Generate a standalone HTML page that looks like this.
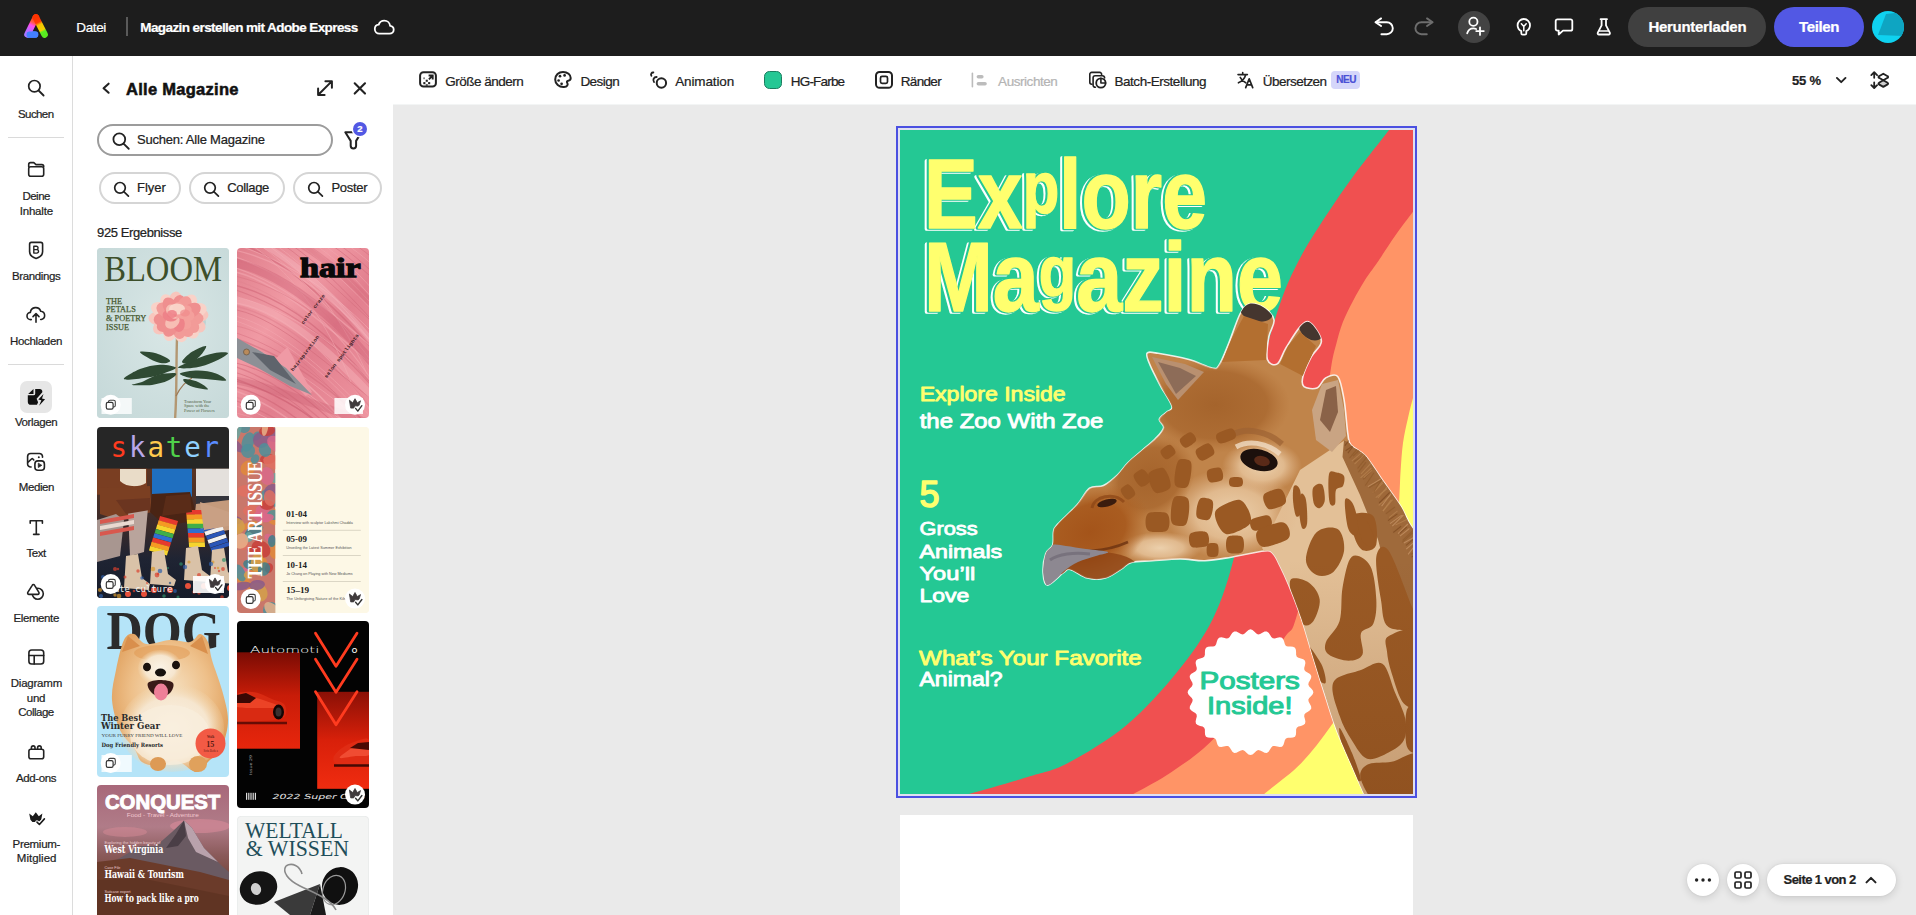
<!DOCTYPE html>
<html lang="de">
<head>
<meta charset="utf-8">
<title>Magazin erstellen mit Adobe Express</title>
<style>
*{box-sizing:border-box;margin:0;padding:0}
html,body{width:1916px;height:915px;overflow:hidden}
body{position:relative;background:#eaeaea;font-family:"Liberation Sans",sans-serif;color:#222;-webkit-font-smoothing:antialiased}
.abs{position:absolute}
svg{display:block;overflow:visible}
.t{position:absolute;white-space:nowrap;line-height:1;-webkit-text-stroke:.22px currentColor}
/* top bar */
#top{position:absolute;left:0;top:0;width:1916px;height:56px;background:#1d1d1d}
#top .t{color:#fff}
/* rail */
#rail{position:absolute;left:0;top:56px;width:73px;height:859px;background:#fff;border-right:1px solid #dcdcdc}
#rail .lbl{position:absolute;left:0;width:72px;text-align:center;font-size:12px;line-height:15px;color:#222;letter-spacing:-0.3px}
#rail .ico{position:absolute}
#rail hr{position:absolute;left:8px;width:56px;border:0;border-top:1px solid #dadada}
/* panel */
#panel{position:absolute;left:73px;top:56px;width:320px;height:859px;background:#fff;overflow:hidden}
/* toolbar */
#bar{position:absolute;left:393px;top:56px;width:1523px;height:49px;background:#fff;border-bottom:1px solid #f3f5f5}
#bar .t{font-size:14px;color:#222;letter-spacing:-0.45px}
/* canvas */
#stage{position:absolute;left:393px;top:105px;width:1523px;height:810px;overflow:hidden}
.thumb{position:absolute;width:132px;border-radius:4px;overflow:hidden}
</style>
</head>
<body>

<!-- TOPBAR -->
<div id="top">
<svg class="abs" style="left:20px;top:10px" width="32" height="32" viewBox="20 10 32 32" fill="none" stroke-width="6.600" stroke-linecap="round">
<defs>
<linearGradient id="lgL" x1="35.900" y1="17.300" x2="27.400" y2="34.600" gradientUnits="userSpaceOnUse">
<stop offset="0" stop-color="#ff3300"/><stop offset=".3" stop-color="#ff5a4a"/><stop offset=".48" stop-color="#ff4df0"/><stop offset=".75" stop-color="#c366ff"/><stop offset="1" stop-color="#a878ff"/>
</linearGradient>
<linearGradient id="lgR" x1="35.900" y1="17.300" x2="44.700" y2="34.800" gradientUnits="userSpaceOnUse">
<stop offset="0" stop-color="#ff3300"/><stop offset=".28" stop-color="#ff3a08"/><stop offset=".42" stop-color="#f5c400"/><stop offset=".72" stop-color="#f2d000"/><stop offset=".82" stop-color="#5aee22"/><stop offset="1" stop-color="#58ea20"/>
</linearGradient>
</defs>
<path d="M28.300 34.500h6.800" stroke="#4480ff"/>
<path d="M35.900 17.400L27.500 34.400" stroke="url(#lgL)"/>
<path d="M29.600 34.700h5.400" stroke="#4480ff" stroke-width="6.200"/>
<path d="M35.900 17.400L44.600 34.600" stroke="url(#lgR)"/>
</svg>
<span class="t" style="left:76.3px;top:20.6px;font-size:13.5px;color:#fff;letter-spacing:-0.383px;">Datei</span>
<div class="abs" style="left:126px;top:17px;width:1.5px;height:19px;background:#5a5a5a"></div>
<span class="t" style="left:140.3px;top:20.6px;font-size:13.5px;font-weight:700;color:#fff;letter-spacing:-0.591px;">Magazin erstellen mit Adobe Express</span>
<svg class="abs" style="left:372px;top:18px" width="24" height="18" viewBox="372 18 24 18" fill="none" stroke="#fff" stroke-width="1.8" stroke-linejoin="round" stroke-linecap="round">
<path d="M379.300 33.700h10.200c2.400 0 4.200-1.700 4.200-3.900 0-2.100-1.600-3.700-3.600-3.900-.300-3-2.700-5.300-5.800-5.300-2.600 0-4.800 1.600-5.600 4-2.200.200-3.900 2-3.900 4.400 0 2.600 2 4.700 4.500 4.700z"/></svg>
<svg class="abs" style="left:1370px;top:14px" width="70" height="26" viewBox="1370 14 70 26" fill="none" stroke-width="1.9" stroke-linecap="round" stroke-linejoin="round">
<g stroke="#fff"><path d="M1381.100 18.400l-5.600 3.800 5.600 3.800"/><path d="M1376.200 22.200h10.600a6 6 0 0 1 0 12h-5.400"/></g>
<g stroke="#6e6e6e"><path d="M1427 18.400l5.600 3.800-5.600 3.800"/><path d="M1431.800 22.200h-10.400a6 6 0 0 0 0 12h5.400"/></g>
</svg>
<svg class="abs" style="left:1458px;top:11px" width="32" height="32" viewBox="1458 11 32 32" fill="none" stroke="#fff" stroke-width="1.8" stroke-linecap="round">
<circle cx="1474" cy="27" r="16" fill="#434343" stroke="none"/>
<circle cx="1473.400" cy="21.700" r="4.100"/>
<path d="M1467.200 33.300c.800-3 3.200-4.900 6.200-4.900 1 0 1.900.200 2.700.600"/>
<path d="M1480 27.300v7.600M1476.200 31.100h7.600"/></svg>
<svg class="abs" style="left:1514px;top:16px" width="20" height="22" viewBox="1514 16 20 22" fill="none" stroke="#fff" stroke-width="1.8" stroke-linecap="round" stroke-linejoin="round">
<path d="M1521.300 33.200v-2.100c-2.300-1.200-3.700-3.300-3.700-5.900a6.200 6.200 0 0 1 12.400 0c0 2.600-1.400 4.700-3.700 5.900v2.100a1.400 1.400 0 0 1-1.400 1.400h-2.200a1.400 1.400 0 0 1-1.400-1.400z"/>
<path d="M1521.400 23.800l2.400 2.600 2.400-2.600M1523.800 26.400v4.400" stroke-width="1.5"/></svg>
<svg class="abs" style="left:1552px;top:16px" width="24" height="22" viewBox="1552 16 24 22" fill="none" stroke="#fff" stroke-width="1.8" stroke-linejoin="round">
<path d="M1557.400 19.300h13.200a1.700 1.700 0 0 1 1.700 1.700v8a1.700 1.700 0 0 1-1.700 1.700h-7.600l-4.300 3.800v-3.800h-1.300a1.700 1.700 0 0 1-1.700-1.700v-8a1.700 1.700 0 0 1 1.700-1.700z"/></svg>
<svg class="abs" style="left:1594px;top:16px" width="20" height="22" viewBox="1594 16 20 22" fill="none" stroke="#fff" stroke-width="1.8" stroke-linejoin="round" stroke-linecap="round">
<path d="M1600.600 19.200h6.400M1601.600 19.400v6l-3.800 7.200a1.300 1.300 0 0 0 1.200 1.900h9.600a1.300 1.300 0 0 0 1.200-1.900l-3.800-7.200v-6"/>
<path d="M1599.300 31h9" stroke-width="1.600"/></svg>
<div class="abs" style="left:1628px;top:7px;width:138px;height:40px;border-radius:20px;background:#404040"></div>
<span class="t" style="left:1648.4px;top:19.1px;font-size:15px;font-weight:700;color:#fff;letter-spacing:-0.293px;">Herunterladen</span>
<div class="abs" style="left:1774px;top:7px;width:90px;height:40px;border-radius:20px;background:#5258e4"></div>
<span class="t" style="left:1799.0px;top:19.1px;font-size:15px;font-weight:700;color:#fff;letter-spacing:-0.372px;">Teilen</span>
<svg class="abs" style="left:1872px;top:11px" width="32" height="32" viewBox="0 0 32 32">
<defs><clipPath id="avc"><circle cx="16" cy="16" r="16"/></clipPath></defs>
<circle cx="16" cy="16" r="16" fill="#0fd2f0"/>
<path d="M14 3L32 1V25L6 24z" fill="#0ea5c2" clip-path="url(#avc)"/></svg>
</div>

<!-- RAIL -->
<div id="rail">
<svg class="abs" style="left:26px;top:22px" width="20" height="20" viewBox="26 78 20 20" fill="none" stroke="#222" stroke-width="1.6" stroke-linecap="round" stroke-linejoin="round"><circle cx="34.400" cy="86.200" r="5.700" stroke-width="1.700"/><path d="M38.600 90.500l5 5" stroke-width="1.800"/></svg>
<span class="t" style="left:18.0px;top:52.8px;font-size:11.5px;color:#1f1f1f;letter-spacing:-0.586px;">Suchen</span>
<hr style="top:81px">
<svg class="abs" style="left:26px;top:104px" width="20" height="19" viewBox="26 160 20 19" fill="none" stroke="#222" stroke-width="1.6" stroke-linecap="round" stroke-linejoin="round"><path d="M28.700 166.800v-2.400a1.800 1.800 0 0 1 1.800-1.800h3.300l2.200 2h5.900a1.800 1.800 0 0 1 1.800 1.800v.4"/><rect x="28.700" y="166.800" width="15" height="9.500" rx="2"/></svg>
<span class="t" style="left:22.4px;top:134.9px;font-size:11.5px;color:#1f1f1f;letter-spacing:-0.492px;">Deine</span>
<span class="t" style="left:19.7px;top:149.8px;font-size:11.5px;color:#1f1f1f;letter-spacing:-0.190px;">Inhalte</span>
<svg class="abs" style="left:27px;top:184px" width="18" height="21" viewBox="27 240 18 21" fill="none" stroke="#222" stroke-width="1.6" stroke-linecap="round" stroke-linejoin="round"><path d="M31.400 242.400h9.400a1.800 1.800 0 0 1 1.800 1.800v7.600c0 3.200-2.400 5.400-6.500 6.600-4.100-1.200-6.500-3.400-6.500-6.600v-7.600a1.800 1.800 0 0 1 1.800-1.800z"/><path d="M33.800 246.300h2.600a1.600 1.600 0 0 1 0 3.300h-2.600zM33.800 249.600h3a1.750 1.750 0 0 1 0 3.500h-3z" stroke-width="1.400"/></svg>
<span class="t" style="left:12.0px;top:214.6px;font-size:11.5px;color:#1f1f1f;letter-spacing:-0.366px;">Brandings</span>
<svg class="abs" style="left:25px;top:250px" width="22" height="19" viewBox="25 306 22 19" fill="none" stroke="#222" stroke-width="1.6" stroke-linecap="round" stroke-linejoin="round"><path d="M31.300 319.600h-.5a3.600 3.600 0 0 1-.4-7.200 5.300 5.300 0 0 1 10.300-1.200 4.200 4.200 0 0 1 .6 8.300h-.6"/><path d="M36 322.200v-8.400M33 316.600l3-3 3 3"/></svg>
<span class="t" style="left:10.1px;top:279.6px;font-size:11.5px;color:#1f1f1f;letter-spacing:-0.343px;">Hochladen</span>
<hr style="top:308px">
<div class="abs" style="left:20px;top:325px;width:32px;height:32px;border-radius:7px;background:#e6e6e6"></div>
<svg class="abs" style="left:26px;top:331px" width="21" height="20" viewBox="26 387 21 20" fill="#111" stroke="none"><path d="M28.200 393.900l5.300-4.800v4.800z"/><path d="M35.200 388.900h4.600c1.500 0 2.500 1 2.500 2.400v.9l-5.700 6.500 1.500 3.500-1.100 2.650h-6.100a3.100 3.100 0 0 1-3.100-3.100v-6.500h5.800a1.600 1.600 0 0 0 1.600-1.600z"/><path d="M43.500 393.900l-5.200 5.700 3.050.65-2.200 5.500 5.900-6.600-3.050-.65z"/></svg>
<span class="t" style="left:14.9px;top:361.4px;font-size:11.5px;color:#1f1f1f;letter-spacing:-0.388px;">Vorlagen</span>
<svg class="abs" style="left:25px;top:396px" width="22" height="20" viewBox="25 452 22 20" fill="none" stroke="#222" stroke-width="1.6" stroke-linecap="round" stroke-linejoin="round"><path d="M31.100 467h-.4a3.100 3.100 0 0 1-3.100-3.100v-7.300a3.100 3.100 0 0 1 3.100-3.100h8.700a3.100 3.100 0 0 1 3.100 3.100v.7"/><circle cx="38.800" cy="457.300" r="1" fill="#222" stroke="none"/><path d="M28.400 461.900l3.100-2.900c.5-.4 1-.4 1.400 0l.9 1"/><rect x="34.900" y="460.900" width="9.500" height="9.300" rx="3"/><path d="M38.300 463.500v4l3.200-2z" fill="#222" stroke-width=".8"/></svg>
<span class="t" style="left:18.8px;top:426.3px;font-size:11.5px;color:#1f1f1f;letter-spacing:-0.403px;">Medien</span>
<svg class="abs" style="left:28px;top:463px" width="17" height="18" viewBox="28 519 17 18" fill="none" stroke="#222" stroke-width="1.6" stroke-linecap="round" stroke-linejoin="round"><path d="M30.200 523.300v-2.500h12.200v2.500M36.300 520.800v13.600M33.600 534.400h5.400"/></svg>
<span class="t" style="left:26.4px;top:491.7px;font-size:11.5px;color:#1f1f1f;letter-spacing:-0.448px;">Text</span>
<svg class="abs" style="left:26px;top:526px" width="20" height="20" viewBox="26 582 20 20" fill="none" stroke="#222" stroke-width="1.6" stroke-linecap="round" stroke-linejoin="round"><circle cx="37.800" cy="593.800" r="5.500"/><path d="M32.200 585.300a1.350 1.350 0 0 1 2.400 0l4.300 7.100a1.350 1.350 0 0 1-1.200 2h-8.700a1.350 1.350 0 0 1-1.200-2z" fill="#fff"/></svg>
<span class="t" style="left:13.5px;top:556.6px;font-size:11.5px;color:#1f1f1f;letter-spacing:-0.399px;">Elemente</span>
<svg class="abs" style="left:27px;top:592px" width="19" height="18" viewBox="27 648 19 18" fill="none" stroke="#222" stroke-width="1.6" stroke-linecap="round" stroke-linejoin="round"><rect x="28.900" y="650" width="14.800" height="14" rx="2.800"/><path d="M28.900 655.500h14.800M34.200 655.500v8.500"/></svg>
<span class="t" style="left:10.8px;top:622.3px;font-size:11.5px;color:#1f1f1f;letter-spacing:-0.231px;">Diagramm</span>
<span class="t" style="left:26.7px;top:636.8px;font-size:11.5px;color:#1f1f1f;letter-spacing:-0.196px;">und</span>
<span class="t" style="left:18.3px;top:651.3px;font-size:11.5px;color:#1f1f1f;letter-spacing:-0.514px;">Collage</span>
<svg class="abs" style="left:27px;top:688px" width="19" height="17" viewBox="27 744 19 17" fill="none" stroke="#222" stroke-width="1.6" stroke-linecap="round" stroke-linejoin="round"><rect x="28.900" y="749.300" width="14.800" height="9.400" rx="2"/><path d="M31.400 749.300v-1.600a1.800 1.800 0 0 1 3.600 0v1.600M37.600 749.300v-1.600a1.800 1.800 0 0 1 3.600 0v1.600"/></svg>
<span class="t" style="left:16.1px;top:716.7px;font-size:11.5px;color:#1f1f1f;letter-spacing:-0.421px;">Add-ons</span>
<svg class="abs" style="left:28px;top:755px" width="19" height="16" viewBox="28 811 19 16" fill="none" stroke="#222" stroke-width="1.6" stroke-linecap="round" stroke-linejoin="round"><path d="M29.200 813.600l3.600 2.600 3-3.900 3 3.900 3.600-2.600-1.200 6.200-2.600 2.100h-6.200l-2-2.100z" fill="#1a1a1a" stroke="none"/><path d="M37 822.100l2.400 2.400 5-5.600" stroke="#fff" stroke-width="3.600"/><path d="M37 822.100l2.400 2.400 5-5.600" stroke="#1a1a1a" stroke-width="1.600"/></svg>
<span class="t" style="left:12.5px;top:782.8px;font-size:11.5px;color:#1f1f1f;letter-spacing:-0.280px;">Premium-</span>
<span class="t" style="left:16.8px;top:796.7px;font-size:11.5px;color:#1f1f1f;letter-spacing:0.007px;">Mitglied</span>
</div>

<!-- PANEL -->
<div id="panel">
<svg class="abs" style="left:27px;top:25px" width="12" height="14" viewBox="100 81 12 14" fill="none" stroke="#222" stroke-width="1.7" stroke-linecap="round" stroke-linejoin="round"><path d="M108.600 83.700l-5 4.500 5 4.500" stroke-width="2.100"/></svg>
<span class="t" style="left:53.0px;top:24.8px;font-size:16.5px;font-weight:700;color:#111;letter-spacing:0.275px;-webkit-text-stroke:.55px #111;">Alle Magazine</span>
<svg class="abs" style="left:242px;top:22px" width="20" height="20" viewBox="315 78 20 20" fill="none" stroke="#222" stroke-width="1.7" stroke-linecap="round" stroke-linejoin="round"><path d="M318.300 94.800l13.400-13.400M325.400 81.200h6.500v6.500M324.600 95h-6.500v-6.500" stroke-width="2"/></svg>
<svg class="abs" style="left:279px;top:25px" width="16" height="15" viewBox="352 81 16 15" fill="none" stroke="#222" stroke-width="1.7" stroke-linecap="round" stroke-linejoin="round"><path d="M354.700 83.300l10.300 10.300M365 83.300l-10.300 10.300" stroke-width="2.100"/></svg>
<div class="abs" style="left:24px;top:68px;width:236px;height:32px;border:2px solid #9c9c9c;border-radius:16px;background:#fff"></div>
<svg class="abs" style="left:37px;top:74px" width="20" height="21" viewBox="110 130 20 21" fill="none" stroke="#222" stroke-width="1.800" stroke-linecap="round"><circle cx="119.3" cy="139.3" r="5.9"/><path d="M123.55 143.55l5.2 5.2"/></svg>
<span class="t" style="left:64.0px;top:76.8px;font-size:13px;color:#222;letter-spacing:-0.217px;">Suchen: Alle Magazine</span>
<svg class="abs" style="left:269px;top:73px" width="20" height="22" viewBox="342 129 20 22" fill="none" stroke="#222" stroke-width="1.7" stroke-linecap="round" stroke-linejoin="round"><path d="M345.300 132.300h16.200l-5.400 8.600v4.900a2.700 2.700 0 0 1-5.400 0v-4.900z" stroke-width="2"/></svg>
<div class="abs" style="left:279.8px;top:66.2px;width:14px;height:14px;border-radius:7px;background:#5258e4;box-shadow:0 0 0 1.500px #fff"></div>
<span class="t" style="left:284.3px;top:67.9px;font-size:9.5px;font-weight:700;color:#fff;letter-spacing:0.000px;">2</span>
<div class="abs" style="left:26px;top:116px;width:82px;height:32px;border:2px solid #d5d5d5;border-radius:16px;background:#fff"></div>
<svg class="abs" style="left:39px;top:124px" width="20" height="20" viewBox="112 180 20 20" fill="none" stroke="#222" stroke-width="1.700" stroke-linecap="round"><circle cx="120.0" cy="187.8" r="5.3"/><path d="M123.82 191.62l4.6 4.6"/></svg>
<span class="t" style="left:64.0px;top:125.0px;font-size:13px;color:#222;letter-spacing:-0.038px;">Flyer</span>
<div class="abs" style="left:116px;top:116px;width:96px;height:32px;border:2px solid #d5d5d5;border-radius:16px;background:#fff"></div>
<svg class="abs" style="left:129px;top:124px" width="20" height="20" viewBox="202 180 20 20" fill="none" stroke="#222" stroke-width="1.700" stroke-linecap="round"><circle cx="210.0" cy="187.8" r="5.3"/><path d="M213.82 191.62l4.6 4.6"/></svg>
<span class="t" style="left:154.2px;top:125.0px;font-size:13px;color:#222;letter-spacing:-0.328px;">Collage</span>
<div class="abs" style="left:220px;top:116px;width:89px;height:32px;border:2px solid #d5d5d5;border-radius:16px;background:#fff"></div>
<svg class="abs" style="left:233px;top:124px" width="20" height="20" viewBox="306 180 20 20" fill="none" stroke="#222" stroke-width="1.700" stroke-linecap="round"><circle cx="314.0" cy="187.8" r="5.3"/><path d="M317.82 191.62l4.6 4.6"/></svg>
<span class="t" style="left:258.4px;top:125.0px;font-size:13px;color:#222;letter-spacing:-0.296px;">Poster</span>
<span class="t" style="left:24.1px;top:169.6px;font-size:13px;color:#222;letter-spacing:-0.396px;">925 Ergebnisse</span>
<div class="thumb" style="left:24px;top:192px;height:170px"><svg width="132" height="170" viewBox="97 248 132 170" style="overflow:hidden"><rect x="97" y="248" width="132" height="170" fill="#cfe0df"/>
<defs><radialGradient id="blg" cx=".55" cy=".45" r=".7"><stop offset="0" stop-color="#d9e7e6"/><stop offset="1" stop-color="#c6d9d9"/></radialGradient></defs><rect x="97" y="248" width="132" height="170" fill="url(#blg)"/>
<text x="104.2" y="280.8" textLength="117.8" lengthAdjust="spacingAndGlyphs" font-family="Liberation Serif, serif" font-weight="400" font-size="36.5" fill="#3d4f2a" >BLOOM</text>
<text x="106" y="303.8" font-family="Liberation Serif, serif" font-weight="400" font-size="8.3" fill="#47592f" stroke="#47592f" stroke-width=".25">THE</text>
<text x="106" y="312.45" font-family="Liberation Serif, serif" font-weight="400" font-size="8.3" fill="#47592f" stroke="#47592f" stroke-width=".25">PETALS</text>
<text x="106" y="321.1" font-family="Liberation Serif, serif" font-weight="400" font-size="8.3" fill="#47592f" stroke="#47592f" stroke-width=".25">&amp; POETRY</text>
<text x="106" y="329.75" font-family="Liberation Serif, serif" font-weight="400" font-size="8.3" fill="#47592f" stroke="#47592f" stroke-width=".25">ISSUE</text>
<path d="M177 338c-1 30 0 55-2 82" stroke="#b39772" stroke-width="2.400" fill="none"/>
<path d="M176 396c4-8 8-14 16-18" stroke="#9c7a58" stroke-width="1.300" fill="none"/>
<path d="M176.0 367.6C175.3 366.2 166.0 364.5 160.0 364.7C154.0 365.0 146.0 366.6 140.0 369.0C134.0 371.4 123.0 377.7 124.0 379.1C125.0 380.6 139.3 378.6 146.0 377.7C152.7 376.7 159.0 375.0 164.0 373.4C169.0 371.7 176.7 369.0 176.0 367.6Z" fill="#2f4a33"/>
<path d="M176.0 373.4C174.3 372.4 163.7 373.4 158.0 374.8C152.3 376.2 146.3 380.3 142.0 382.0C137.7 383.7 130.3 384.4 132.0 384.9C133.7 385.4 146.0 385.6 152.0 384.9C158.0 384.2 164.0 382.5 168.0 380.6C172.0 378.6 177.7 374.3 176.0 373.4Z" fill="#2f4a33"/>
<path d="M170.0 360.4C169.0 358.7 161.0 354.6 156.0 353.2C151.0 351.8 141.0 350.8 140.0 351.8C139.0 352.7 146.3 357.0 150.0 359.0C153.7 360.9 158.7 363.0 162.0 363.3C165.3 363.5 171.0 362.1 170.0 360.4Z" fill="#2f4a33"/>
<path d="M178.0 367.6C178.0 366.2 190.0 361.4 196.0 359.0C202.0 356.6 208.7 354.2 214.0 353.2C219.3 352.2 228.0 351.8 228.0 353.2C228.0 354.6 219.3 359.4 214.0 361.8C208.7 364.2 202.0 366.6 196.0 367.6C190.0 368.6 178.0 369.0 178.0 367.6Z" fill="#2f4a33"/>
<path d="M180.0 373.4C181.3 372.2 192.0 370.5 198.0 370.5C204.0 370.5 211.3 371.7 216.0 373.4C220.7 375.0 227.7 379.6 226.0 380.6C224.3 381.5 212.0 379.6 206.0 379.1C200.0 378.6 194.3 378.6 190.0 377.7C185.7 376.7 178.7 374.6 180.0 373.4Z" fill="#2f4a33"/>
<path d="M182.0 361.8C182.3 359.9 188.0 354.4 192.0 351.8C196.0 349.1 204.7 345.3 206.0 346.0C207.3 346.7 202.7 353.2 200.0 356.1C197.3 359.0 193.0 362.3 190.0 363.3C187.0 364.2 181.7 363.8 182.0 361.8Z" fill="#2f4a33"/>
<path d="M184.0 379.1C186.0 378.9 194.0 380.3 198.0 382.0C202.0 383.7 208.3 388.2 208.0 389.2C207.7 390.2 199.7 388.7 196.0 387.8C192.3 386.8 188.0 384.9 186.0 383.4C184.0 382.0 182.0 379.4 184.0 379.1Z" fill="#2f4a33"/>
<ellipse cx="180" cy="322" rx="26" ry="14" fill="#9fb5b6" opacity=".35"/>
<ellipse cx="198.5" cy="315.2" rx="10" ry="7" fill="#f8c6bd" transform="rotate(-3 198.5 315.2)"/>
<ellipse cx="196.1" cy="324.9" rx="10" ry="7" fill="#f8c6bd" transform="rotate(28 196.1 324.9)"/>
<ellipse cx="190.6" cy="329.5" rx="10" ry="7" fill="#f9d2c8" transform="rotate(53 190.6 329.5)"/>
<ellipse cx="180.9" cy="332.4" rx="10" ry="7" fill="#f9d2c8" transform="rotate(83 180.9 332.4)"/>
<ellipse cx="170.9" cy="331.4" rx="10" ry="7" fill="#f9d2c8" transform="rotate(112 170.9 331.4)"/>
<ellipse cx="162.1" cy="326.3" rx="10" ry="7" fill="#f8c6bd" transform="rotate(145 162.1 326.3)"/>
<ellipse cx="158.5" cy="318.3" rx="10" ry="7" fill="#f8c6bd" transform="rotate(179 158.5 318.3)"/>
<ellipse cx="160.5" cy="309.7" rx="10" ry="7" fill="#f9d2c8" transform="rotate(206 160.5 309.7)"/>
<ellipse cx="168.1" cy="303.6" rx="10" ry="7" fill="#f9d2c8" transform="rotate(239 168.1 303.6)"/>
<ellipse cx="176.2" cy="301.6" rx="10" ry="7" fill="#f8c6bd" transform="rotate(264 176.2 301.6)"/>
<ellipse cx="189.2" cy="303.7" rx="10" ry="7" fill="#f9d2c8" transform="rotate(302 189.2 303.7)"/>
<ellipse cx="197.0" cy="310.5" rx="10" ry="7" fill="#f9d2c8" transform="rotate(338 197.0 310.5)"/>
<ellipse cx="193.5" cy="318.3" rx="10" ry="7" fill="#f29b98" transform="rotate(1 193.5 318.3)"/>
<ellipse cx="190.3" cy="324.8" rx="10" ry="7" fill="#f29b98" transform="rotate(38 190.3 324.8)"/>
<ellipse cx="185.8" cy="327.6" rx="10" ry="7" fill="#f29b98" transform="rotate(61 185.8 327.6)"/>
<ellipse cx="179.4" cy="329.0" rx="10" ry="7" fill="#f29b98" transform="rotate(86 179.4 329.0)"/>
<ellipse cx="170.8" cy="327.5" rx="10" ry="7" fill="#ef8f8f" transform="rotate(121 170.8 327.5)"/>
<ellipse cx="166.0" cy="324.0" rx="10" ry="7" fill="#ef8f8f" transform="rotate(147 166.0 324.0)"/>
<ellipse cx="163.6" cy="319.1" rx="10" ry="7" fill="#ef8f8f" transform="rotate(175 163.6 319.1)"/>
<ellipse cx="165.7" cy="310.3" rx="10" ry="7" fill="#f29b98" transform="rotate(211 165.7 310.3)"/>
<ellipse cx="170.5" cy="306.7" rx="10" ry="7" fill="#ef8f8f" transform="rotate(238 170.5 306.7)"/>
<ellipse cx="179.5" cy="305.0" rx="10" ry="7" fill="#ef8f8f" transform="rotate(274 179.5 305.0)"/>
<ellipse cx="184.2" cy="305.8" rx="10" ry="7" fill="#f29b98" transform="rotate(292 184.2 305.8)"/>
<ellipse cx="191.5" cy="310.5" rx="10" ry="7" fill="#ef8f8f" transform="rotate(330 191.5 310.5)"/>
<ellipse cx="186.5" cy="315.9" rx="8" ry="6" fill="#f4a09c" transform="rotate(-1 186.5 315.9)"/>
<ellipse cx="184.2" cy="322.2" rx="8" ry="6" fill="#f4a09c" transform="rotate(44 184.2 322.2)"/>
<ellipse cx="178.8" cy="324.0" rx="8" ry="6" fill="#ee8389" transform="rotate(88 178.8 324.0)"/>
<ellipse cx="172.4" cy="321.9" rx="8" ry="6" fill="#f7beb4" transform="rotate(140 172.4 321.9)"/>
<ellipse cx="170.5" cy="315.5" rx="8" ry="6" fill="#ee8389" transform="rotate(185 170.5 315.5)"/>
<ellipse cx="173.0" cy="311.7" rx="8" ry="6" fill="#f7beb4" transform="rotate(226 173.0 311.7)"/>
<ellipse cx="178.5" cy="310.0" rx="8" ry="6" fill="#f4a09c" transform="rotate(270 178.5 310.0)"/>
<ellipse cx="184.5" cy="312.1" rx="8" ry="6" fill="#f4a09c" transform="rotate(319 184.5 312.1)"/>
<ellipse cx="177" cy="309" rx="8" ry="5.500" fill="#f9d8cd" opacity=".9"/>
<ellipse cx="172" cy="314" rx="5" ry="4" fill="#ee7c84" opacity=".8"/>
<ellipse cx="185" cy="313" rx="5" ry="3.500" fill="#f08a8c" opacity=".7"/>
<text x="184" y="402.5" font-family="Liberation Serif, serif" font-weight="400" font-size="4.3" fill="#4f6040" >Transform Your</text>
<text x="184" y="407.0" font-family="Liberation Serif, serif" font-weight="400" font-size="4.3" fill="#4f6040" >Space with the</text>
<text x="184" y="411.5" font-family="Liberation Serif, serif" font-weight="400" font-size="4.3" fill="#4f6040" >Power of Flowers</text>
<rect x="101.5" y="398" width="30.3" height="16" fill="#fff" opacity="0.8"/>
<circle cx="110.7" cy="404.8" r="10" fill="#fff"/><rect x="108.5" y="400.2" width="6.800" height="6.800" rx="1.600" fill="none" stroke="#444" stroke-width="1.100"/><rect x="106.3" y="402.40000000000003" width="6.800" height="6.800" rx="1.600" fill="#fff" stroke="#333" stroke-width="1.200"/></svg></div>
<div class="thumb" style="left:164px;top:192px;height:170px"><svg width="132" height="170" viewBox="237 248 132 170" style="overflow:hidden"><defs><linearGradient id="hg" x1="0" y1="0" x2="1" y2="1"><stop offset="0" stop-color="#e07f8c"/><stop offset=".35" stop-color="#f09aa4"/><stop offset=".6" stop-color="#e27f8e"/><stop offset="1" stop-color="#ee95a0"/></linearGradient></defs>
<rect x="237" y="248" width="132" height="170" fill="url(#hg)"/>
<path d="M230 240c40 12 90 49 145 112" stroke="#cf6577" stroke-width="1.5" fill="none" opacity=".55"/>
<path d="M230 243c40 12 90 35 145 92" stroke="#f7b6bc" stroke-width="0.8" fill="none" opacity=".55"/>
<path d="M230 249c40 8 90 32 145 97" stroke="#f4aab2" stroke-width="1.3" fill="none" opacity=".55"/>
<path d="M230 255c40 13 90 45 145 95" stroke="#f4aab2" stroke-width="1.4" fill="none" opacity=".55"/>
<path d="M230 259c40 8 90 33 145 119" stroke="#e0808e" stroke-width="0.6" fill="none" opacity=".55"/>
<path d="M230 266c40 13 90 36 145 119" stroke="#f4aab2" stroke-width="1.1" fill="none" opacity=".55"/>
<path d="M230 271c40 6 90 49 145 96" stroke="#f4aab2" stroke-width="1.6" fill="none" opacity=".55"/>
<path d="M230 275c40 8 90 33 145 94" stroke="#d46c7c" stroke-width="0.7" fill="none" opacity=".55"/>
<path d="M230 279c40 10 90 42 145 111" stroke="#e0808e" stroke-width="0.7" fill="none" opacity=".55"/>
<path d="M230 284c40 9 90 36 145 104" stroke="#cf6577" stroke-width="1.3" fill="none" opacity=".55"/>
<path d="M230 288c40 13 90 37 145 102" stroke="#d46c7c" stroke-width="1.1" fill="none" opacity=".55"/>
<path d="M230 295c40 10 90 30 145 91" stroke="#f7b6bc" stroke-width="0.8" fill="none" opacity=".55"/>
<path d="M230 302c40 5 90 35 145 115" stroke="#f4aab2" stroke-width="1.1" fill="none" opacity=".55"/>
<path d="M230 305c40 7 90 39 145 108" stroke="#e0808e" stroke-width="1.4" fill="none" opacity=".55"/>
<path d="M230 309c40 4 90 49 145 93" stroke="#cf6577" stroke-width="0.9" fill="none" opacity=".55"/>
<path d="M230 315c40 7 90 48 145 106" stroke="#f4aab2" stroke-width="0.9" fill="none" opacity=".55"/>
<path d="M230 319c40 12 90 43 145 112" stroke="#f4aab2" stroke-width="0.9" fill="none" opacity=".55"/>
<path d="M230 325c40 5 90 42 145 118" stroke="#d46c7c" stroke-width="0.6" fill="none" opacity=".55"/>
<path d="M230 331c40 12 90 39 145 103" stroke="#cf6577" stroke-width="0.7" fill="none" opacity=".55"/>
<path d="M230 337c40 12 90 37 145 96" stroke="#d46c7c" stroke-width="1.6" fill="none" opacity=".55"/>
<path d="M230 340c40 10 90 46 145 93" stroke="#f4aab2" stroke-width="1.0" fill="none" opacity=".55"/>
<path d="M230 344c40 7 90 39 145 120" stroke="#f7b6bc" stroke-width="1.5" fill="none" opacity=".55"/>
<path d="M230 352c40 14 90 44 145 100" stroke="#f7b6bc" stroke-width="0.9" fill="none" opacity=".55"/>
<path d="M230 355c40 5 90 46 145 106" stroke="#f4aab2" stroke-width="0.8" fill="none" opacity=".55"/>
<path d="M230 362c40 6 90 40 145 105" stroke="#cf6577" stroke-width="1.1" fill="none" opacity=".55"/>
<path d="M230 365c40 12 90 45 145 111" stroke="#d46c7c" stroke-width="1.3" fill="none" opacity=".55"/>
<path d="M230 371c40 10 90 43 145 115" stroke="#cf6577" stroke-width="0.9" fill="none" opacity=".55"/>
<path d="M230 377c40 14 90 37 145 95" stroke="#cf6577" stroke-width="1.5" fill="none" opacity=".55"/>
<path d="M230 380c40 7 90 35 145 99" stroke="#cf6577" stroke-width="1.1" fill="none" opacity=".55"/>
<path d="M230 386c40 7 90 43 145 112" stroke="#cf6577" stroke-width="1.4" fill="none" opacity=".55"/>
<path d="M230 389c40 13 90 44 145 119" stroke="#f4aab2" stroke-width="1.6" fill="none" opacity=".55"/>
<path d="M230 395c40 14 90 34 145 101" stroke="#e0808e" stroke-width="1.5" fill="none" opacity=".55"/>
<path d="M230 399c40 11 90 45 145 95" stroke="#d46c7c" stroke-width="1.4" fill="none" opacity=".55"/>
<path d="M230 405c40 7 90 41 145 116" stroke="#f7b6bc" stroke-width="0.9" fill="none" opacity=".55"/>
<path d="M230 412c40 6 90 39 145 110" stroke="#f4aab2" stroke-width="0.8" fill="none" opacity=".55"/>
<path d="M230 416c40 14 90 50 145 95" stroke="#d46c7c" stroke-width="1.5" fill="none" opacity=".55"/>
<path d="M230 418c40 9 90 41 145 102" stroke="#f4aab2" stroke-width="1.0" fill="none" opacity=".55"/>
<path d="M230 426c40 10 90 35 145 117" stroke="#d46c7c" stroke-width="0.6" fill="none" opacity=".55"/>
<path d="M230 430c40 13 90 47 145 111" stroke="#cf6577" stroke-width="1.1" fill="none" opacity=".55"/>
<path d="M230 437c40 10 90 32 145 106" stroke="#e0808e" stroke-width="0.9" fill="none" opacity=".55"/>
<path d="M230 440c40 12 90 38 145 114" stroke="#cf6577" stroke-width="1.2" fill="none" opacity=".55"/>
<path d="M230 444c40 6 90 38 145 104" stroke="#f4aab2" stroke-width="0.8" fill="none" opacity=".55"/>
<path d="M230 449c40 8 90 48 145 90" stroke="#d46c7c" stroke-width="0.7" fill="none" opacity=".55"/>
<path d="M230 455c40 9 90 37 145 116" stroke="#e0808e" stroke-width="1.2" fill="none" opacity=".55"/>
<path d="M230 460c40 9 90 40 145 111" stroke="#f4aab2" stroke-width="1.0" fill="none" opacity=".55"/>
<path d="M230 466c40 10 90 35 145 119" stroke="#f4aab2" stroke-width="1.1" fill="none" opacity=".55"/>
<path d="M250 244c30 20 70 60 101 138" stroke="#f4aab2" stroke-width="1" fill="none" opacity=".5"/>
<path d="M258 244c30 20 70 60 115 119" stroke="#f4aab2" stroke-width="1" fill="none" opacity=".5"/>
<path d="M266 244c30 20 70 60 101 130" stroke="#f4aab2" stroke-width="1" fill="none" opacity=".5"/>
<path d="M274 244c30 20 70 60 107 111" stroke="#f4aab2" stroke-width="1" fill="none" opacity=".5"/>
<path d="M282 244c30 20 70 60 125 110" stroke="#d46c7c" stroke-width="1" fill="none" opacity=".5"/>
<path d="M290 244c30 20 70 60 117 117" stroke="#cf6577" stroke-width="1" fill="none" opacity=".5"/>
<path d="M298 244c30 20 70 60 123 117" stroke="#f4aab2" stroke-width="1" fill="none" opacity=".5"/>
<path d="M306 244c30 20 70 60 125 132" stroke="#f4aab2" stroke-width="1" fill="none" opacity=".5"/>
<path d="M314 244c30 20 70 60 109 128" stroke="#f4aab2" stroke-width="1" fill="none" opacity=".5"/>
<path d="M322 244c30 20 70 60 116 136" stroke="#f4aab2" stroke-width="1" fill="none" opacity=".5"/>
<path d="M330 244c30 20 70 60 127 110" stroke="#cf6577" stroke-width="1" fill="none" opacity=".5"/>
<path d="M338 244c30 20 70 60 109 126" stroke="#d46c7c" stroke-width="1" fill="none" opacity=".5"/>
<path d="M346 244c30 20 70 60 118 132" stroke="#f4aab2" stroke-width="1" fill="none" opacity=".5"/>
<path d="M354 244c30 20 70 60 114 121" stroke="#d46c7c" stroke-width="1" fill="none" opacity=".5"/>
<path d="M362 244c30 20 70 60 124 114" stroke="#cf6577" stroke-width="1" fill="none" opacity=".5"/>
<path d="M370 244c30 20 70 60 108 124" stroke="#d46c7c" stroke-width="1" fill="none" opacity=".5"/>
<path d="M232 262c40 8 90 40 140 100" stroke="#c9566c" stroke-width="9" fill="none" opacity="0.35"/>
<path d="M232 300c40 6 84 36 140 96" stroke="#f6b4bb" stroke-width="7" fill="none" opacity="0.45"/>
<path d="M232 380c30 4 70 20 140 44" stroke="#c85a6e" stroke-width="8" fill="none" opacity="0.3"/>
<path d="M262 244c40 22 80 60 112 100" stroke="#f8bcc2" stroke-width="6" fill="none" opacity="0.4"/>
<path d="M300 244c24 14 50 36 72 60" stroke="#cc5f72" stroke-width="7" fill="none" opacity="0.3"/>
<path d="M272.0 362.3L287.4 347.0L312.0 392.0L305.7 396.0Z" fill="#ef9aa5"/>
<path d="M237.0 338.0L262.0 352.0L286.0 368.0L312.0 395.0L290.0 386.0L258.0 368.0L237.0 358.0Z" fill="#8d9096"/>
<path d="M252.0 352.0L274.0 356.0L296.0 384.0L270.0 370.0Z" fill="#5f646c"/>
<circle cx="246.500" cy="352" r="3" fill="#b98a5a" stroke="#6a5a4a" stroke-width=".8"/>
<text x="300" y="277.4" textLength="60.8" lengthAdjust="spacingAndGlyphs" font-family="Liberation Serif, serif" font-weight="700" font-size="28" fill="#0a0a0a" stroke="#0a0a0a" stroke-width="1.300">hair</text>
<g transform="rotate(-52.800 303.4 324.4)"><text x="303.4" y="324.4" textLength="36" lengthAdjust="spacingAndGlyphs" font-family="Liberation Mono, monospace" font-weight="700" font-size="4.8" fill="#3a2026" >color craze</text></g>
<g transform="rotate(-52.800 293.1 371.5)"><text x="293.1" y="371.5" textLength="43.4" lengthAdjust="spacingAndGlyphs" font-family="Liberation Mono, monospace" font-weight="700" font-size="4.8" fill="#3a2026" >hairspiration</text></g>
<g transform="rotate(-52.800 326.4 378.4)"><text x="326.4" y="378.4" textLength="54" lengthAdjust="spacingAndGlyphs" font-family="Liberation Mono, monospace" font-weight="700" font-size="4.8" fill="#3a2026" >salon spotlights</text></g>
<rect x="334.4" y="398" width="28.6" height="16" fill="#fff" opacity="0.85"/>
<circle cx="250.7" cy="404.8" r="10" fill="#fff"/><rect x="248.5" y="400.2" width="6.800" height="6.800" rx="1.600" fill="none" stroke="#444" stroke-width="1.100"/><rect x="246.29999999999998" y="402.40000000000003" width="6.800" height="6.800" rx="1.600" fill="#fff" stroke="#333" stroke-width="1.200"/>
<circle cx="355" cy="404.8" r="10" fill="#fff"/><path d="M349.4 400.2L352.7 402.8L355.0 398.7L357.3 402.8L360.5 400.8L359.2 405.1L358.2 406.1L355.0 405.8L353.7 408.1L350.7 408.1Z" fill="#3f3a3c" stroke="#3f3a3c" stroke-width=".8" stroke-linejoin="round"/><path d="M355.6 408.4L357.8 411.1L361.9 405.7" stroke="#fff" stroke-width="3.200" fill="none"/><path d="M355.6 408.4L357.8 411.1L361.9 405.7" stroke="#333" stroke-width="1.400" fill="none" stroke-linecap="round" stroke-linejoin="round"/></svg></div>
<div class="thumb" style="left:24px;top:371px;height:171px"><svg width="132" height="171" viewBox="97 427 132 171" style="overflow:hidden"><rect x="97" y="427" width="132" height="171" fill="#262626"/>
<text x="110.6" y="457.2" font-family="DejaVu Sans Mono, monospace" font-weight="400" font-size="27.5" fill="#ff3b1f" >s</text>
<text x="129.0" y="457.2" font-family="DejaVu Sans Mono, monospace" font-weight="400" font-size="27.5" fill="#b9a7e8" >k</text>
<text x="147.39999999999998" y="457.2" font-family="DejaVu Sans Mono, monospace" font-weight="400" font-size="27.5" fill="#ffc94d" >a</text>
<text x="165.79999999999998" y="457.2" font-family="DejaVu Sans Mono, monospace" font-weight="400" font-size="27.5" fill="#4fd04a" >t</text>
<text x="184.2" y="457.2" font-family="DejaVu Sans Mono, monospace" font-weight="400" font-size="27.5" fill="#8fd0ff" >e</text>
<text x="202.6" y="457.2" font-family="DejaVu Sans Mono, monospace" font-weight="400" font-size="27.5" fill="#5a8cff" >r</text>
<defs><linearGradient id="skp" x1="0" y1="0" x2="0" y2="1"><stop offset="0" stop-color="#5a3424"/><stop offset=".45" stop-color="#3a2a2a"/><stop offset=".7" stop-color="#1f2433"/><stop offset="1" stop-color="#161c2a"/></linearGradient></defs>
<rect x="97" y="468.700" width="132" height="129.300" fill="url(#skp)"/>
<rect x="97" y="468.700" width="50" height="26" fill="#7a3e22"/><path d="M120 469h26v14c-8 5-20 4-26-2z" fill="#e9dcc8"/>
<rect x="152" y="468.700" width="40" height="28" fill="#1f6fc0"/>
<rect x="196" y="468.700" width="33" height="30" fill="#e4e0dc"/>
<rect x="196" y="496" width="33" height="10" fill="#33333b"/>
<path d="M100.0 488.0L150.0 486.0L152.0 512.0L118.0 520.0L100.0 514.0Z" fill="#7b3f22"/>
<path d="M152.0 494.0L190.0 492.0L198.0 520.0L166.0 526.0L150.0 512.0Z" fill="#4a2414"/>
<path d="M196.0 504.0L229.0 500.0L229.0 530.0L206.0 534.0L194.0 522.0Z" fill="#c49a7c"/>
<path d="M97.0 520.0L116.0 514.0L124.0 520.0L120.0 556.0L97.0 562.0Z" fill="#a89690"/>
<path d="M128.0 510.0L148.0 508.0L144.0 552.0L130.0 556.0Z" fill="#b9a49c"/>
<path d="M116.0 500.0L150.0 498.0L150.0 510.0L126.0 514.0Z" fill="#6b3520"/>
<path d="M100 520l34-6v4l-34 6z" fill="#d8584e"/>
<path d="M100 526l34-6v4l-34 6z" fill="#e9d9d0"/>
<path d="M100 532l34-6v4l-34 6z" fill="#d8584e"/>
<path d="M160.0 516.0l18 5-1.200 4.400-18-5z" fill="#e63a2e"/>
<path d="M158.6 520.3l18 5-1.200 4.400-18-5z" fill="#f59a23"/>
<path d="M157.2 524.6l18 5-1.200 4.400-18-5z" fill="#f6d52e"/>
<path d="M155.8 528.9l18 5-1.200 4.400-18-5z" fill="#3fae49"/>
<path d="M154.4 533.2l18 5-1.200 4.400-18-5z" fill="#2f6fd0"/>
<path d="M153.0 537.5l18 5-1.200 4.400-18-5z" fill="#e63a2e"/>
<path d="M151.6 541.8l18 5-1.200 4.400-18-5z" fill="#f59a23"/>
<path d="M150.2 546.1l18 5-1.200 4.400-18-5z" fill="#f6d52e"/>
<path d="M186.0 510.0l16 0 .3 4.700-16 0z" fill="#e63a2e"/>
<path d="M186.4 514.6l16 0 .3 4.700-16 0z" fill="#f59a23"/>
<path d="M186.8 519.2l16 0 .3 4.700-16 0z" fill="#f6d52e"/>
<path d="M187.2 523.8l16 0 .3 4.700-16 0z" fill="#3fae49"/>
<path d="M187.6 528.4l16 0 .3 4.700-16 0z" fill="#2f6fd0"/>
<path d="M188.0 533.0l16 0 .3 4.700-16 0z" fill="#e63a2e"/>
<path d="M188.4 537.6l16 0 .3 4.700-16 0z" fill="#f59a23"/>
<path d="M188.8 542.2l16 0 .3 4.700-16 0z" fill="#f6d52e"/>
<path d="M166.0 496.0L190.0 494.0L192.0 512.0L162.0 516.0Z" fill="#5a2c18"/>
<path d="M203.0 528.0l18-6 1.200 3.800-18 6z" fill="#2a56b8"/>
<path d="M204.5 532.0l18-6 1.200 3.800-18 6z" fill="#f2f2f2"/>
<path d="M206.0 536.0l18-6 1.200 3.800-18 6z" fill="#2a56b8"/>
<path d="M207.5 540.0l18-6 1.200 3.800-18 6z" fill="#f2f2f2"/>
<path d="M209.0 544.0l18-6 1.200 3.800-18 6z" fill="#2a56b8"/>
<path d="M210.5 548.0l18-6 1.200 3.800-18 6z" fill="#2a56b8"/>
<path d="M200.0 502.0L229.0 512.0L229.0 526.0L204.0 530.0Z" fill="#c9a084"/>
<path d="M126.0 556.0L138.0 554.0L142.0 578.0L150.0 584.0L148.0 590.0L124.0 588.0Z" fill="#d9c2a8"/>
<circle cx="128" cy="594" r="3" fill="#e8503a"/><circle cx="144" cy="594" r="3" fill="#e8503a"/>
<path d="M152.0 552.0L164.0 550.0L168.0 574.0L176.0 580.0L174.0 586.0L150.0 584.0Z" fill="#d9c2a8"/>
<circle cx="154" cy="590" r="3" fill="#e8503a"/><circle cx="170" cy="590" r="3" fill="#e8503a"/>
<path d="M186.0 548.0L198.0 546.0L202.0 570.0L210.0 576.0L208.0 582.0L184.0 580.0Z" fill="#d9c2a8"/>
<circle cx="188" cy="586" r="3" fill="#e8503a"/><circle cx="204" cy="586" r="3" fill="#e8503a"/>
<path d="M212.0 550.0L224.0 548.0L228.0 572.0L236.0 578.0L234.0 584.0L210.0 582.0Z" fill="#d9c2a8"/>
<circle cx="214" cy="588" r="3" fill="#e8503a"/><circle cx="230" cy="588" r="3" fill="#e8503a"/>
<circle cx="158" cy="574" r="1.2" fill="#d8402e" opacity=".7"/>
<circle cx="142" cy="578" r="1.8" fill="#2f5fa8" opacity=".7"/>
<circle cx="170" cy="583" r="1.1" fill="#d89a2e" opacity=".7"/>
<circle cx="119" cy="596" r="2.3" fill="#d89a2e" opacity=".7"/>
<circle cx="118" cy="569" r="1.2" fill="#d8402e" opacity=".7"/>
<circle cx="199" cy="575" r="2.0" fill="#d8402e" opacity=".7"/>
<circle cx="218" cy="568" r="1.3" fill="#d89a2e" opacity=".7"/>
<circle cx="214" cy="589" r="2.3" fill="#d89a2e" opacity=".7"/>
<circle cx="134" cy="591" r="1.3" fill="#d8402e" opacity=".7"/>
<circle cx="213" cy="562" r="1.5" fill="#d89a2e" opacity=".7"/>
<circle cx="115" cy="569" r="2.0" fill="#d8402e" opacity=".7"/>
<circle cx="224" cy="560" r="2.1" fill="#2f8f6a" opacity=".7"/>
<circle cx="215" cy="568" r="1.0" fill="#d8402e" opacity=".7"/>
<circle cx="115" cy="595" r="1.7" fill="#d89a2e" opacity=".7"/>
<circle cx="168" cy="568" r="1.1" fill="#2f8f6a" opacity=".7"/>
<circle cx="181" cy="564" r="1.8" fill="#2f8f6a" opacity=".7"/>
<circle cx="221" cy="587" r="1.1" fill="#2f5fa8" opacity=".7"/>
<circle cx="170" cy="583" r="1.2" fill="#2f5fa8" opacity=".7"/>
<circle cx="194" cy="582" r="1.0" fill="#d89a2e" opacity=".7"/>
<circle cx="223" cy="569" r="1.9" fill="#d8402e" opacity=".7"/>
<circle cx="194" cy="592" r="1.7" fill="#d8402e" opacity=".7"/>
<circle cx="211" cy="564" r="2.2" fill="#2f5fa8" opacity=".7"/>
<circle cx="157" cy="575" r="2.4" fill="#d8402e" opacity=".7"/>
<circle cx="147" cy="583" r="1.0" fill="#d8402e" opacity=".7"/>
<circle cx="125" cy="577" r="1.5" fill="#d8402e" opacity=".7"/>
<circle cx="138" cy="571" r="1.7" fill="#d8402e" opacity=".7"/>
<circle cx="100" cy="590" r="2.1" fill="#d89a2e" opacity=".7"/>
<circle cx="143" cy="590" r="1.8" fill="#d8402e" opacity=".7"/>
<circle cx="153" cy="569" r="2.3" fill="#d89a2e" opacity=".7"/>
<circle cx="164" cy="596" r="1.8" fill="#2f8f6a" opacity=".7"/>
<circle cx="185" cy="567" r="2.2" fill="#2f5fa8" opacity=".7"/>
<circle cx="101" cy="596" r="2.1" fill="#2f5fa8" opacity=".7"/>
<circle cx="222" cy="597" r="1.8" fill="#d8402e" opacity=".7"/>
<circle cx="103" cy="577" r="2.1" fill="#2f5fa8" opacity=".7"/>
<circle cx="178" cy="597" r="1.5" fill="#2f8f6a" opacity=".7"/>
<circle cx="160" cy="571" r="2.3" fill="#2f5fa8" opacity=".7"/>
<circle cx="189" cy="562" r="1.6" fill="#d89a2e" opacity=".7"/>
<circle cx="175" cy="591" r="1.9" fill="#2f5fa8" opacity=".7"/>
<circle cx="199" cy="593" r="1.7" fill="#d8402e" opacity=".7"/>
<circle cx="219" cy="571" r="1.2" fill="#d8402e" opacity=".7"/>
<text x="103.3" y="592" textLength="69.3" lengthAdjust="spacingAndGlyphs" font-family="DejaVu Sans Mono, monospace" font-weight="400" font-size="8.3" fill="#f2f2f2" >skate culture</text>
<rect x="193" y="576" width="31" height="17" fill="#fff" opacity="0.9"/>
<circle cx="110.7" cy="584" r="10" fill="#fff"/><rect x="108.5" y="579.4" width="6.800" height="6.800" rx="1.600" fill="none" stroke="#444" stroke-width="1.100"/><rect x="106.3" y="581.6" width="6.800" height="6.800" rx="1.600" fill="#fff" stroke="#333" stroke-width="1.200"/>
<circle cx="215" cy="584" r="10" fill="#fff"/><path d="M209.4 579.4L212.7 582.0L215.0 577.9L217.3 582.0L220.5 580.0L219.2 584.3L218.2 585.3L215.0 585.0L213.7 587.3L210.7 587.3Z" fill="#3f3a3c" stroke="#3f3a3c" stroke-width=".8" stroke-linejoin="round"/><path d="M215.6 587.6L217.8 590.3L221.9 584.9" stroke="#fff" stroke-width="3.200" fill="none"/><path d="M215.6 587.6L217.8 590.3L221.9 584.9" stroke="#333" stroke-width="1.400" fill="none" stroke-linecap="round" stroke-linejoin="round"/></svg></div>
<div class="thumb" style="left:164px;top:371px;height:186px"><svg width="132" height="186" viewBox="237 427 132 186" style="overflow:hidden"><rect x="237" y="427" width="132" height="186" fill="#fdf8e6"/>
<rect x="237" y="427" width="38.400" height="186" fill="#c9776a"/>
<ellipse cx="254" cy="531" rx="10" ry="5" fill="#3f7f8a" opacity=".85" transform="rotate(154 254 531)"/>
<ellipse cx="243" cy="578" rx="7" ry="6" fill="#e08a3a" opacity=".85" transform="rotate(17 243 578)"/>
<ellipse cx="248" cy="442" rx="10" ry="6" fill="#4f8f9a" opacity=".85" transform="rotate(107 248 442)"/>
<ellipse cx="252" cy="511" rx="9" ry="6" fill="#e07060" opacity=".85" transform="rotate(3 252 511)"/>
<ellipse cx="257" cy="436" rx="5" ry="4" fill="#4f8f9a" opacity=".85" transform="rotate(140 257 436)"/>
<ellipse cx="249" cy="537" rx="5" ry="4" fill="#6aa6a0" opacity=".85" transform="rotate(90 249 537)"/>
<ellipse cx="263" cy="512" rx="6" ry="8" fill="#d9688a" opacity=".85" transform="rotate(127 263 512)"/>
<ellipse cx="248" cy="469" rx="6" ry="3" fill="#d9688a" opacity=".85" transform="rotate(72 248 469)"/>
<ellipse cx="271" cy="498" rx="11" ry="7" fill="#4f8f9a" opacity=".85" transform="rotate(38 271 498)"/>
<ellipse cx="274" cy="435" rx="7" ry="7" fill="#8a5a8a" opacity=".85" transform="rotate(13 274 435)"/>
<ellipse cx="261" cy="573" rx="6" ry="3" fill="#e8b08a" opacity=".85" transform="rotate(3 261 573)"/>
<ellipse cx="252" cy="600" rx="5" ry="7" fill="#4f8f9a" opacity=".85" transform="rotate(11 252 600)"/>
<ellipse cx="268" cy="459" rx="8" ry="5" fill="#c8403a" opacity=".85" transform="rotate(177 268 459)"/>
<ellipse cx="267" cy="505" rx="7" ry="5" fill="#c8403a" opacity=".85" transform="rotate(0 267 505)"/>
<ellipse cx="271" cy="610" rx="8" ry="8" fill="#4f8f9a" opacity=".85" transform="rotate(38 271 610)"/>
<ellipse cx="252" cy="587" rx="8" ry="4" fill="#e08a3a" opacity=".85" transform="rotate(38 252 587)"/>
<ellipse cx="246" cy="572" rx="6" ry="4" fill="#d9688a" opacity=".85" transform="rotate(13 246 572)"/>
<ellipse cx="244" cy="546" rx="4" ry="5" fill="#e07060" opacity=".85" transform="rotate(82 244 546)"/>
<ellipse cx="275" cy="517" rx="8" ry="7" fill="#e08a3a" opacity=".85" transform="rotate(113 275 517)"/>
<ellipse cx="248" cy="468" rx="8" ry="7" fill="#e08a3a" opacity=".85" transform="rotate(133 248 468)"/>
<ellipse cx="274" cy="462" rx="11" ry="7" fill="#e07060" opacity=".85" transform="rotate(14 274 462)"/>
<ellipse cx="237" cy="446" rx="8" ry="4" fill="#8a5a8a" opacity=".85" transform="rotate(46 237 446)"/>
<ellipse cx="270" cy="538" rx="6" ry="4" fill="#d9688a" opacity=".85" transform="rotate(23 270 538)"/>
<ellipse cx="255" cy="549" rx="8" ry="3" fill="#c8403a" opacity=".85" transform="rotate(165 255 549)"/>
<ellipse cx="244" cy="428" rx="6" ry="5" fill="#4f8f9a" opacity=".85" transform="rotate(8 244 428)"/>
<ellipse cx="247" cy="526" rx="11" ry="3" fill="#e08a3a" opacity=".85" transform="rotate(160 247 526)"/>
<ellipse cx="276" cy="550" rx="9" ry="6" fill="#e08a3a" opacity=".85" transform="rotate(106 276 550)"/>
<ellipse cx="274" cy="515" rx="7" ry="5" fill="#4f8f9a" opacity=".85" transform="rotate(4 274 515)"/>
<ellipse cx="262" cy="517" rx="9" ry="5" fill="#d9688a" opacity=".85" transform="rotate(14 262 517)"/>
<ellipse cx="258" cy="565" rx="10" ry="7" fill="#e08a3a" opacity=".85" transform="rotate(143 258 565)"/>
<ellipse cx="273" cy="492" rx="9" ry="8" fill="#8a5a8a" opacity=".85" transform="rotate(170 273 492)"/>
<ellipse cx="236" cy="520" rx="4" ry="6" fill="#8a5a8a" opacity=".85" transform="rotate(105 236 520)"/>
<ellipse cx="261" cy="440" rx="8" ry="8" fill="#8a5a8a" opacity=".85" transform="rotate(131 261 440)"/>
<ellipse cx="251" cy="565" rx="8" ry="5" fill="#3f7f8a" opacity=".85" transform="rotate(15 251 565)"/>
<ellipse cx="267" cy="431" rx="8" ry="5" fill="#c8403a" opacity=".85" transform="rotate(172 267 431)"/>
<ellipse cx="240" cy="573" rx="9" ry="5" fill="#4f8f9a" opacity=".85" transform="rotate(66 240 573)"/>
<ellipse cx="241" cy="541" rx="8" ry="7" fill="#e8b08a" opacity=".85" transform="rotate(119 241 541)"/>
<ellipse cx="254" cy="594" rx="6" ry="6" fill="#c8403a" opacity=".85" transform="rotate(114 254 594)"/>
<ellipse cx="269" cy="568" rx="5" ry="4" fill="#c8403a" opacity=".85" transform="rotate(105 269 568)"/>
<ellipse cx="248" cy="451" rx="7" ry="7" fill="#4f8f9a" opacity=".85" transform="rotate(128 248 451)"/>
<ellipse cx="275" cy="478" rx="5" ry="5" fill="#6aa6a0" opacity=".85" transform="rotate(167 275 478)"/>
<ellipse cx="270" cy="498" rx="8" ry="6" fill="#e07060" opacity=".85" transform="rotate(81 270 498)"/>
<ellipse cx="238" cy="431" rx="10" ry="3" fill="#6aa6a0" opacity=".85" transform="rotate(103 238 431)"/>
<ellipse cx="248" cy="575" rx="4" ry="4" fill="#d4a04a" opacity=".85" transform="rotate(34 248 575)"/>
<ellipse cx="267" cy="476" rx="9" ry="7" fill="#d9688a" opacity=".85" transform="rotate(80 267 476)"/>
<ellipse cx="261" cy="549" rx="10" ry="8" fill="#c8403a" opacity=".85" transform="rotate(36 261 549)"/>
<ellipse cx="255" cy="459" rx="4" ry="5" fill="#4f8f9a" opacity=".85" transform="rotate(32 255 459)"/>
<ellipse cx="246" cy="491" rx="9" ry="6" fill="#e07060" opacity=".85" transform="rotate(179 246 491)"/>
<ellipse cx="242" cy="586" rx="9" ry="4" fill="#8a5a8a" opacity=".85" transform="rotate(168 242 586)"/>
<ellipse cx="265" cy="450" rx="7" ry="6" fill="#4f8f9a" opacity=".85" transform="rotate(68 265 450)"/>
<ellipse cx="259" cy="592" rx="10" ry="8" fill="#d4a04a" opacity=".85" transform="rotate(59 259 592)"/>
<ellipse cx="276" cy="444" rx="10" ry="7" fill="#d9688a" opacity=".85" transform="rotate(38 276 444)"/>
<ellipse cx="273" cy="611" rx="11" ry="6" fill="#e8b08a" opacity=".85" transform="rotate(47 273 611)"/>
<ellipse cx="265" cy="428" rx="8" ry="3" fill="#e8b08a" opacity=".85" transform="rotate(99 265 428)"/>
<ellipse cx="267" cy="518" rx="4" ry="7" fill="#d9688a" opacity=".85" transform="rotate(77 267 518)"/>
<ellipse cx="236" cy="526" rx="9" ry="8" fill="#d4a04a" opacity=".85" transform="rotate(27 236 526)"/>
<ellipse cx="257" cy="562" rx="10" ry="6" fill="#d4a04a" opacity=".85" transform="rotate(104 257 562)"/>
<ellipse cx="264" cy="569" rx="7" ry="6" fill="#3f7f8a" opacity=".85" transform="rotate(115 264 569)"/>
<ellipse cx="257" cy="585" rx="8" ry="5" fill="#8a5a8a" opacity=".85" transform="rotate(172 257 585)"/>
<ellipse cx="272" cy="541" rx="6" ry="4" fill="#3f7f8a" opacity=".85" transform="rotate(94 272 541)"/>
<rect x="275.400" y="427" width="95" height="186" fill="#fdf8e6"/>
<g transform="rotate(-90 262 578.400)"><text x="262" y="578.4" textLength="117" lengthAdjust="spacingAndGlyphs" font-family="Liberation Serif, serif" font-weight="700" font-size="20" fill="#fff" >THE ART ISSUE</text></g>
<text x="286.2" y="516.9" textLength="20.7" lengthAdjust="spacingAndGlyphs" font-family="Liberation Serif, serif" font-weight="700" font-size="8" fill="#222" >01-04</text>
<text x="286.2" y="523.6999999999999" textLength="66.6" lengthAdjust="spacingAndGlyphs" font-family="Liberation Sans, sans-serif" font-weight="400" font-size="3.6" fill="#555" >Interview with sculptor Lakshmi Chadda</text>
<rect x="282.800" y="529.9" width="78" height=".5" fill="#b9b4a4"/>
<text x="286.2" y="542.3" textLength="20.7" lengthAdjust="spacingAndGlyphs" font-family="Liberation Serif, serif" font-weight="700" font-size="8" fill="#222" >05-09</text>
<text x="286.2" y="549.0999999999999" textLength="65.5" lengthAdjust="spacingAndGlyphs" font-family="Liberation Sans, sans-serif" font-weight="400" font-size="3.6" fill="#555" >Unveiling the Latest Summer Exhibition</text>
<rect x="282.800" y="555.3" width="78" height=".5" fill="#b9b4a4"/>
<text x="286.2" y="568" textLength="20.7" lengthAdjust="spacingAndGlyphs" font-family="Liberation Serif, serif" font-weight="700" font-size="8" fill="#222" >10-14</text>
<text x="286.2" y="574.8" textLength="66.4" lengthAdjust="spacingAndGlyphs" font-family="Liberation Sans, sans-serif" font-weight="400" font-size="3.6" fill="#555" >Jo Chang on Playing with New Mediums</text>
<rect x="282.800" y="581.0" width="78" height=".5" fill="#b9b4a4"/>
<text x="286.2" y="593.3" textLength="23" lengthAdjust="spacingAndGlyphs" font-family="Liberation Serif, serif" font-weight="700" font-size="8" fill="#222" >15–19</text>
<text x="286.2" y="600.0999999999999" textLength="60" lengthAdjust="spacingAndGlyphs" font-family="Liberation Sans, sans-serif" font-weight="400" font-size="3.6" fill="#555" >The Unforgiving Nature of the Kiln</text>
<circle cx="250.7" cy="599" r="10" fill="#fff"/><rect x="248.5" y="594.4" width="6.800" height="6.800" rx="1.600" fill="none" stroke="#444" stroke-width="1.100"/><rect x="246.29999999999998" y="596.6" width="6.800" height="6.800" rx="1.600" fill="#fff" stroke="#333" stroke-width="1.200"/>
<circle cx="355" cy="598.6" r="10" fill="#fff"/><path d="M349.4 594.0L352.7 596.6L355.0 592.5L357.3 596.6L360.5 594.6L359.2 598.9L358.2 599.9L355.0 599.6L353.7 601.9L350.7 601.9Z" fill="#3f3a3c" stroke="#3f3a3c" stroke-width=".8" stroke-linejoin="round"/><path d="M355.6 602.2L357.8 604.9L361.9 599.5" stroke="#fff" stroke-width="3.200" fill="none"/><path d="M355.6 602.2L357.8 604.9L361.9 599.5" stroke="#333" stroke-width="1.400" fill="none" stroke-linecap="round" stroke-linejoin="round"/></svg></div>
<div class="thumb" style="left:24px;top:550px;height:171px"><svg width="132" height="171" viewBox="97 606 132 171" style="overflow:hidden"><rect x="97" y="606" width="132" height="171" fill="#b5e4f8"/>
<text x="106.5" y="648.7" textLength="114.3" lengthAdjust="spacingAndGlyphs" font-family="Liberation Serif, serif" font-weight="700" font-size="54" fill="#2b2b2b" >DOG</text>
<defs><radialGradient id="dg" cx=".5" cy=".42" r=".6"><stop offset="0" stop-color="#f6e2c4"/><stop offset=".55" stop-color="#eec08a"/><stop offset="1" stop-color="#dd9a55"/></radialGradient><radialGradient id="dgc" cx=".5" cy=".5" r=".5"><stop offset="0" stop-color="#fbf3e6"/><stop offset=".7" stop-color="#f6e6cf"/><stop offset="1" stop-color="#f1d5ad" stop-opacity=".2"/></radialGradient></defs>
<path d="M124.0 640.0C127.0 634.0 130.3 633.3 134.0 634.0C137.7 634.7 140.0 643.0 146.0 644.0C152.0 645.0 162.7 640.3 170.0 640.0C177.3 639.7 185.0 643.0 190.0 642.0C195.0 641.0 197.0 634.0 200.0 634.0C203.0 634.0 206.0 637.7 208.0 642.0C210.0 646.3 209.7 652.0 212.0 660.0C214.3 668.0 219.3 680.0 222.0 690.0C224.7 700.0 228.0 710.7 228.0 720.0C228.0 729.3 225.3 739.0 222.0 746.0C218.7 753.0 212.3 757.7 208.0 762.0C203.7 766.3 201.3 772.3 196.0 772.0C190.7 771.7 182.0 761.0 176.0 760.0C170.0 759.0 165.7 765.7 160.0 766.0C154.3 766.3 146.3 765.0 142.0 762.0C137.7 759.0 137.7 753.3 134.0 748.0C130.3 742.7 123.7 738.0 120.0 730.0C116.3 722.0 112.7 710.0 112.0 700.0C111.3 690.0 114.0 680.0 116.0 670.0C118.0 660.0 121.0 646.0 124.0 640.0Z" fill="url(#dg)"/>
<ellipse cx="172" cy="728" rx="52" ry="44" fill="url(#dgc)"/>
<ellipse cx="170" cy="735" rx="40" ry="30" fill="#f8eedc" opacity=".75"/>
<ellipse cx="162" cy="653" rx="28" ry="8" fill="#e0964e" opacity=".5"/>
<ellipse cx="160" cy="668" rx="22" ry="18" fill="url(#dgc)"/>
<path d="M122.0 652.0L128.0 636.0L140.0 646.0Z" fill="#d98f4c"/><path d="M190.0 646.0L202.0 636.0L208.0 654.0Z" fill="#d98f4c"/>
<ellipse cx="147" cy="667" rx="4" ry="4.300" fill="#1b120e"/><ellipse cx="176" cy="665" rx="4" ry="4.300" fill="#1b120e"/>
<ellipse cx="160.500" cy="672.500" rx="5.500" ry="4" fill="#15100e"/>
<path d="M148.0 683.0C149.5 681.0 155.8 680.0 160.0 680.0C164.2 680.0 171.3 680.8 173.0 683.0C174.7 685.2 172.2 690.7 170.0 693.0C167.8 695.3 163.2 697.2 160.0 697.0C156.8 696.8 153.0 694.3 151.0 692.0C149.0 689.7 146.5 685.0 148.0 683.0Z" fill="#3a1a18"/>
<ellipse cx="161" cy="692" rx="7" ry="8.500" fill="#ee7f98"/>
<ellipse cx="158" cy="764" rx="8" ry="7" fill="#dd9a55"/><ellipse cx="198" cy="764" rx="9" ry="8" fill="#e0a15c"/>
<text x="101" y="720.5" textLength="41" lengthAdjust="spacingAndGlyphs" font-family="DejaVu Serif, serif" font-weight="700" font-size="9.6" fill="#2b2b2b" >The Best</text>
<text x="101" y="729.3" textLength="59" lengthAdjust="spacingAndGlyphs" font-family="DejaVu Serif, serif" font-weight="700" font-size="9.6" fill="#2b2b2b" >Winter Gear</text>
<text x="101.5" y="736.6" textLength="80.8" lengthAdjust="spacingAndGlyphs" font-family="Liberation Serif, serif" font-weight="400" font-size="4.6" fill="#3a3a3a" >YOUR FURRY FRIEND WILL LOVE</text>
<text x="101.5" y="746.9" textLength="61.5" lengthAdjust="spacingAndGlyphs" font-family="DejaVu Serif, serif" font-weight="700" font-size="5.8" fill="#2b2b2b" >Dog Friendly Resorts</text>
<circle cx="210.500" cy="743.400" r="15" fill="#f25a45"/>
<text x="206.3" y="746.5" font-family="Liberation Serif, serif" font-weight="700" font-size="8" fill="#5a1a14" >15</text>
<text x="207" y="738" font-family="Liberation Serif, serif" font-weight="700" font-size="3.2" fill="#6a201a" >Walk</text>
<text x="203.5" y="751.5" font-family="Liberation Serif, serif" font-weight="400" font-size="3" fill="#6a201a" >Sofa Beds a</text>
<rect x="101.5" y="755" width="30.3" height="17" fill="#fff" opacity="0.8"/>
<circle cx="110.7" cy="763" r="10" fill="#fff"/><rect x="108.5" y="758.4" width="6.800" height="6.800" rx="1.600" fill="none" stroke="#444" stroke-width="1.100"/><rect x="106.3" y="760.6" width="6.800" height="6.800" rx="1.600" fill="#fff" stroke="#333" stroke-width="1.200"/></svg></div>
<div class="thumb" style="left:164px;top:565px;height:187px"><svg width="132" height="187" viewBox="237 621 132 187" style="overflow:hidden"><rect x="237" y="621" width="132" height="187" fill="#030303"/>
<defs><linearGradient id="ar1" x1="0" y1="0" x2="0" y2="1"><stop offset="0" stop-color="#7a0c04"/><stop offset=".45" stop-color="#c81c08"/><stop offset="1" stop-color="#e8260c"/></linearGradient><linearGradient id="ar2" x1="0" y1="0" x2="0" y2="1"><stop offset="0" stop-color="#8a1006"/><stop offset=".5" stop-color="#d8200a"/><stop offset="1" stop-color="#f02c10"/></linearGradient></defs>
<rect x="237" y="652.300" width="63" height="96.400" fill="url(#ar1)"/>
<rect x="317.200" y="691.800" width="52" height="97" fill="url(#ar2)"/>
<path d="M237.0 696.0C238.5 691.0 242.5 692.5 246.0 692.0C249.5 691.5 253.7 691.8 258.0 693.0C262.3 694.2 267.7 697.2 272.0 699.0C276.3 700.8 281.7 701.5 284.0 704.0C286.3 706.5 286.7 711.5 286.0 714.0C285.3 716.5 284.0 717.8 280.0 719.0C276.0 720.2 268.0 720.5 262.0 721.0C256.0 721.5 248.2 721.8 244.0 722.0C239.8 722.2 238.2 726.3 237.0 722.0C235.8 717.7 235.5 701.0 237.0 696.0Z" fill="#d92a12"/>
<path d="M237.0 700.0C239.2 698.3 245.2 696.8 250.0 697.0C254.8 697.2 261.0 699.3 266.0 701.0C271.0 702.7 280.7 705.8 280.0 707.0C279.3 708.2 269.2 708.0 262.0 708.0C254.8 708.0 241.2 708.3 237.0 707.0C232.8 705.7 234.8 701.7 237.0 700.0Z" fill="#f04a2c" opacity=".8"/>
<path d="M237.0 695.0L246.0 693.0L256.0 698.0L250.0 703.0L237.0 703.0Z" fill="#3a0804"/>
<ellipse cx="278.500" cy="712" rx="5.500" ry="7.500" fill="#140605"/><ellipse cx="278.500" cy="712" rx="3" ry="4.500" fill="#3a3030"/>
<path d="M237 723h50" stroke="#4a0804" stroke-width="2.500" opacity=".8"/>
<path d="M369.0 740.0C366.5 736.2 358.5 740.7 354.0 742.0C349.5 743.3 345.3 745.7 342.0 748.0C338.7 750.3 335.2 753.5 334.0 756.0C332.8 758.5 333.0 761.5 335.0 763.0C337.0 764.5 340.3 764.7 346.0 765.0C351.7 765.3 365.2 769.2 369.0 765.0C372.8 760.8 371.5 743.8 369.0 740.0Z" fill="#e02c14"/>
<path d="M369.0 744.0C366.8 742.5 359.8 744.7 356.0 746.0C352.2 747.3 348.7 750.0 346.0 752.0C343.3 754.0 338.3 757.3 340.0 758.0C341.7 758.7 351.2 756.5 356.0 756.0C360.8 755.5 366.8 757.0 369.0 755.0C371.2 753.0 371.2 745.5 369.0 744.0Z" fill="#f4553a" opacity=".8"/>
<path d="M369.0 742.0L358.0 743.0L350.0 748.0L369.0 750.0Z" fill="#4a0a04"/>
<path d="M334 765.500h35" stroke="#2a0502" stroke-width="2.500" opacity=".85"/>
<path d="M315.500 633.3L336 666.3L357 633.3" stroke="#ff3b1f" stroke-width="2.800" fill="none" stroke-linecap="round" stroke-linejoin="round"/>
<path d="M315.500 659.2L336 692.2L357 659.2" stroke="#ff3b1f" stroke-width="2.800" fill="none" stroke-linecap="round" stroke-linejoin="round"/>
<path d="M315.500 691.8L336 724.8L357 691.8" stroke="#ff3b1f" stroke-width="2.800" fill="none" stroke-linecap="round" stroke-linejoin="round"/>
<text x="250" y="653.2" textLength="69.5" lengthAdjust="spacingAndGlyphs" font-family="DejaVu Sans, sans-serif" font-weight="400" font-size="9.5" fill="#fff" style="font-weight:200">Automoti</text>
<text x="351.5" y="653.2" textLength="6" lengthAdjust="spacingAndGlyphs" font-family="DejaVu Sans, sans-serif" font-weight="400" font-size="9.5" fill="#fff" >o</text>
<g transform="rotate(-90 251.500 775)"><text x="251.5" y="775" textLength="20" lengthAdjust="spacingAndGlyphs" font-family="DejaVu Sans, sans-serif" font-weight="400" font-size="3.6" fill="#aaa" >Issue 29</text></g>
<rect x="246.0" y="792.800" width="1" height="7" fill="#ddd"/>
<rect x="247.8" y="792.800" width="1" height="7" fill="#ddd"/>
<rect x="249.6" y="792.800" width="1" height="7" fill="#ddd"/>
<rect x="251.4" y="792.800" width="1" height="7" fill="#ddd"/>
<rect x="253.2" y="792.800" width="1" height="7" fill="#ddd"/>
<rect x="255.0" y="792.800" width="1" height="7" fill="#ddd"/>
<text x="272.5" y="798.8" textLength="92.3" lengthAdjust="spacingAndGlyphs" font-family="DejaVu Sans, sans-serif" font-weight="400" font-size="7" fill="#e8e8e8" font-style="italic">2022 Super Cars</text>
<circle cx="355" cy="794.6" r="10" fill="#fff"/><path d="M349.4 790.0L352.7 792.6L355.0 788.5L357.3 792.6L360.5 790.6L359.2 794.9L358.2 795.9L355.0 795.6L353.7 797.9L350.7 797.9Z" fill="#3f3a3c" stroke="#3f3a3c" stroke-width=".8" stroke-linejoin="round"/><path d="M355.6 798.2L357.8 800.9L361.9 795.5" stroke="#fff" stroke-width="3.200" fill="none"/><path d="M355.6 798.2L357.8 800.9L361.9 795.5" stroke="#333" stroke-width="1.400" fill="none" stroke-linecap="round" stroke-linejoin="round"/></svg></div>
<div class="thumb" style="left:24px;top:729px;height:140px"><svg width="132" height="140" viewBox="97 785 132 140" style="overflow:hidden"><defs><linearGradient id="cq" x1="0" y1="0" x2="0" y2="1"><stop offset="0" stop-color="#a8687a"/><stop offset=".3" stop-color="#b07c88"/><stop offset=".5" stop-color="#8a5a5a"/><stop offset=".75" stop-color="#6e3d2c"/><stop offset="1" stop-color="#5c3424"/></linearGradient></defs>
<rect x="97" y="785" width="132" height="140" fill="url(#cq)"/>
<ellipse cx="200" cy="826" rx="30" ry="7" fill="#d98a9a" opacity=".6"/><ellipse cx="125" cy="832" rx="22" ry="5" fill="#d58a96" opacity=".5"/>
<path d="M184.0 820.4L192.0 828.0L204.0 848.0L222.0 866.0L229.0 872.0L229.0 890.0L97.0 890.0L97.0 868.0L120.0 858.0L140.0 846.0L156.0 846.0L172.0 832.0Z" fill="#6a5a62"/>
<path d="M184.0 820.4L192.0 828.0L204.0 848.0L218.0 862.0L196.0 852.0L188.0 838.0Z" fill="#b9a2ac"/>
<path d="M184.0 820.4L176.0 834.0L166.0 848.0L178.0 846.0L186.0 836.0Z" fill="#4a3e46"/>
<path d="M97.0 862.0L130.0 858.0L160.0 864.0L200.0 872.0L229.0 880.0L229.0 925.0L97.0 925.0Z" fill="#6b3b2a"/>
<path d="M97.0 880.0L140.0 878.0L180.0 886.0L229.0 896.0L229.0 925.0L97.0 925.0Z" fill="#5e3322" opacity=".8"/>
<text x="104.9" y="808.7" textLength="115.4" lengthAdjust="spacingAndGlyphs" font-family="Liberation Sans, sans-serif" font-weight="700" font-size="19.5" fill="#fff" stroke="#fff" stroke-width=".9">CONQUEST</text>
<text x="126.8" y="817.3" textLength="72" lengthAdjust="spacingAndGlyphs" font-family="Liberation Sans, sans-serif" font-weight="400" font-size="6" fill="#f2c6cf" >Food - Travel - Adventure</text>
<text x="104.4" y="852.5" textLength="58.9" lengthAdjust="spacingAndGlyphs" font-family="DejaVu Serif, serif" font-weight="700" font-size="10.4" fill="#fff" >West Virginia</text>
<text x="104.4" y="877.6" textLength="79.6" lengthAdjust="spacingAndGlyphs" font-family="DejaVu Serif, serif" font-weight="700" font-size="10.4" fill="#fff" >Hawaii &amp; Tourism</text>
<text x="104.4" y="901.5" textLength="94.4" lengthAdjust="spacingAndGlyphs" font-family="DejaVu Serif, serif" font-weight="700" font-size="10.4" fill="#fff" >How to pack like a pro</text>
<text x="104.4" y="843.5" textLength="56" lengthAdjust="spacingAndGlyphs" font-family="Liberation Sans, sans-serif" font-weight="400" font-size="3.8" fill="#e8c8cc" >Exploring the hidden beauty of</text>
<text x="104.4" y="869.3" font-family="Liberation Sans, sans-serif" font-weight="400" font-size="3.8" fill="#e8c8cc" >Case File</text>
<text x="104.4" y="892.8" font-family="Liberation Sans, sans-serif" font-weight="400" font-size="3.8" fill="#e8c8cc" >Suitcase expert</text></svg></div>
<div class="thumb" style="left:164px;top:760px;height:110px"><svg width="132" height="110" viewBox="237 816 132 110" style="overflow:hidden"><rect x="237" y="816" width="132" height="110" fill="#f3f4f3"/>
<rect x="237.250" y="816.250" width="131.500" height="110" rx="4" fill="none" stroke="#dfe3e2" stroke-width=".5"/>
<text x="245" y="837.6" textLength="97.9" lengthAdjust="spacingAndGlyphs" font-family="Liberation Serif, serif" font-weight="400" font-size="22.3" fill="#1f4e5a" >WELTALL</text>
<text x="245.8" y="855.6" textLength="103.2" lengthAdjust="spacingAndGlyphs" font-family="Liberation Serif, serif" font-weight="400" font-size="22.3" fill="#1f4e5a" >&amp; WISSEN</text>
<ellipse cx="258.500" cy="888" rx="19" ry="16.500" fill="#141414" transform="rotate(-20 258.500 888)"/>
<ellipse cx="256" cy="889" rx="5" ry="6" fill="#cfcfcf" transform="rotate(-20 256 889)"/>
<ellipse cx="340" cy="886" rx="18" ry="19" fill="#101010" transform="rotate(20 340 886)"/>
<ellipse cx="334" cy="890" rx="11" ry="15" fill="none" stroke="#9a9a9a" stroke-width="1.200" transform="rotate(20 334 890)"/><ellipse cx="331" cy="892" rx="10.500" ry="14.500" fill="#2a2a2a" transform="rotate(20 331 892)" opacity="0"/>
<path d="M274.0 902.0L320.0 884.0L310.0 915.0L290.0 915.0Z" fill="#3a3a3a"/><path d="M320.0 884.0L310.0 915.0L326.0 915.0Z" fill="#1a1a1a"/>
<path d="M286 866c-4 6 2 14 14 20s30 12 36 24" stroke="#8a8a8a" stroke-width="1.600" fill="none"/>
<path d="M286 866c6-4 14 0 16 8" stroke="#8a8a8a" stroke-width="1.600" fill="none"/></svg></div>
</div>

<!-- TOOLBAR -->
<div id="bar">
<svg class="abs" style="left:24px;top:13px" width="22" height="21" viewBox="417 69 22 21" fill="none" stroke="#222" stroke-width="1.7" stroke-linecap="round" stroke-linejoin="round"><rect x="420.100" y="72.200" width="15.800" height="14.400" rx="3.400" stroke-width="2"/><path d="M428.600 75.500h4.100v4.100M432.300 75.900l-3.400 3.400" stroke-width="1.900" stroke-linecap="butt" stroke-linejoin="miter"/><g fill="#222" stroke="none"><rect x="425.700" y="79.700" width="2.100" height="2.100"/><rect x="423.300" y="82.100" width="2.100" height="2.100"/><rect x="428.100" y="82.100" width="2.100" height="2.100"/><rect x="425.700" y="84.300" width="2.100" height="1.400"/><rect x="423.200" y="77.400" width="1.800" height="1.800" opacity=".55"/></g></svg>
<span class="t" style="left:52.2px;top:18.7px;font-size:13.5px;color:#222;letter-spacing:-0.487px;">Größe ändern</span>
<svg class="abs" style="left:159px;top:13px" width="22" height="21" viewBox="552 69 22 21" fill="none" stroke="#222" stroke-width="1.7" stroke-linecap="round" stroke-linejoin="round"><path d="M563 71.900c4.600 0 7.700 2.700 7.700 6.100 0 1.800-1.200 2.600-2.500 2.800-1.400.2-1.600 1.100-.9 2.200.9 1.500.2 3.900-3.300 4.100-5 .3-8.800-3.200-8.800-7.600s3.500-7.600 7.800-7.600z" stroke-width="2"/><g fill="#222" stroke="none"><circle cx="560" cy="76.200" r="1.350"/><circle cx="564.600" cy="75.400" r="1.350"/><circle cx="558.600" cy="80.500" r="1.350"/><circle cx="561.600" cy="83.800" r="1.350"/></g></svg>
<span class="t" style="left:187.4px;top:18.7px;font-size:13.5px;color:#222;letter-spacing:-0.555px;">Design</span>
<svg class="abs" style="left:254px;top:13px" width="22" height="21" viewBox="647 69 22 21" fill="none" stroke="#222" stroke-width="1.7" stroke-linecap="round" stroke-linejoin="round"><circle cx="661.400" cy="83" r="4.700" stroke-width="2"/><path d="M653.400 72.500a2.100 2.100 0 0 0-2 3.300" stroke-width="1.800"/><path d="M656.600 77a3.100 3.100 0 0 0-2.600 5" stroke-width="1.900"/></svg>
<span class="t" style="left:282.2px;top:18.7px;font-size:13.5px;color:#222;letter-spacing:-0.127px;">Animation</span>
<div class="abs" style="left:371px;top:15px;width:18px;height:18px;border-radius:5.500px;background:#25c794;border:1.500px solid #1b7d5f"></div>
<span class="t" style="left:397.8px;top:18.7px;font-size:13.5px;color:#222;letter-spacing:-0.814px;">HG-Farbe</span>
<svg class="abs" style="left:480px;top:13px" width="22" height="22" viewBox="873 69 22 22" fill="none" stroke="#222" stroke-width="1.7" stroke-linecap="round" stroke-linejoin="round"><rect x="876" y="72" width="16" height="15.800" rx="3.600" stroke-width="2"/><rect x="880.500" y="76.400" width="7" height="7" rx="1.600" stroke-width="1.700"/></svg>
<span class="t" style="left:507.8px;top:18.7px;font-size:13.5px;color:#222;letter-spacing:-0.680px;">Ränder</span>
<svg class="abs" style="left:577px;top:15px" width="19" height="18" viewBox="970 71 19 18" fill="#bcbcbc" stroke="none"><rect x="971.600" y="72.600" width="1.600" height="15" rx=".8"/><rect x="976.600" y="75" width="7" height="3.500" rx="1.750"/><rect x="976.600" y="82" width="10.200" height="3.500" rx="1.750"/></svg>
<span class="t" style="left:605.1px;top:18.7px;font-size:13.5px;color:#b4b4b4;letter-spacing:-0.450px;">Ausrichten</span>
<svg class="abs" style="left:694px;top:13px" width="22" height="22" viewBox="1087 69 22 22" fill="none" stroke="#222" stroke-width="1.7" stroke-linecap="round" stroke-linejoin="round"><path d="M1092 84.200h-.3a1.900 1.900 0 0 1-1.900-1.900v-8a1.900 1.900 0 0 1 1.900-1.900h8a1.900 1.900 0 0 1 1.900 1.900v.3" stroke-width="1.600"/><path d="M1095.400 87.300h-.2a2.100 2.100 0 0 1-2.100-2.100v-7.400a2.100 2.100 0 0 1 2.100-2.100h7.300a2.100 2.100 0 0 1 2.100 2.100v.2" stroke-width="1.600"/><circle cx="1100.900" cy="83" r="4.700" fill="#fff" stroke-width="1.800"/><path d="M1100.900 78.300v4.700h4.700" stroke-width="1.600"/></svg>
<span class="t" style="left:721.5px;top:18.7px;font-size:13.5px;color:#222;letter-spacing:-0.466px;">Batch-Erstellung</span>
<svg class="abs" style="left:843px;top:14px" width="20" height="20" viewBox="1236 70 20 20" fill="none" stroke="#222" stroke-width="1.7" stroke-linecap="round" stroke-linejoin="round"><path d="M1238 74.600h9.400M1242.700 72.600v2M1245.700 74.800c-.9 3.500-3.400 6.400-7.300 8M1240.200 77.400c1.100 2.300 3 4.200 5.600 5.400" stroke-width="1.600"/><path d="M1245.700 87.600l3.500-8.800 3.500 8.800M1246.900 84.900h4.600" stroke-width="1.700"/></svg>
<span class="t" style="left:869.8px;top:18.7px;font-size:13.5px;color:#222;letter-spacing:-0.525px;">Übersetzen</span>
<div class="abs" style="left:938.3px;top:14.799999999999997px;width:28.400px;height:17.800px;border-radius:4px;background:#d5d6fa"></div>
<span class="t" style="left:943.2px;top:18.9px;font-size:10px;font-weight:700;color:#4a50d6;letter-spacing:-0.475px;">NEU</span>
<span class="t" style="left:1399.0px;top:18.2px;font-size:13px;font-weight:700;color:#222;letter-spacing:-0.160px;">55 %</span>
<svg class="abs" style="left:1441px;top:18px" width="14" height="12" viewBox="1834 74 14 12" fill="none" stroke="#222" stroke-width="1.7" stroke-linecap="round" stroke-linejoin="round"><path d="M1836.900 77.900l4.300 4.300 4.300-4.300" stroke-width="1.900"/></svg>
<svg class="abs" style="left:1476px;top:13px" width="23" height="22" viewBox="1869 69 23 22" fill="none" stroke="#222" stroke-width="1.7" stroke-linecap="round" stroke-linejoin="round"><path d="M1874.200 72.400v5.400M1871.300 75.100l2.900-2.900 2.900 2.900M1874.200 82.400v5.400M1871.300 85.100l2.900 2.900 2.900-2.900" stroke-width="1.800"/><path d="M1883.300 80.300l4.300 2.500a.9.900 0 0 1 0 1.600l-4.300 2.500-4.300-2.500a.9.900 0 0 1 0-1.600z" fill="#cfcfcf" stroke-width="1.900"/><path d="M1883.300 73.700l4.300 2.500a.9.900 0 0 1 0 1.600l-4.300 2.500-4.300-2.500a.9.900 0 0 1 0-1.600z" fill="#fff" stroke-width="1.900"/></svg>
</div>

<!-- STAGE -->
<div id="stage">
<div class="abs" style="left:503px;top:21px;width:521px;height:672px;border:2px solid #4b50e1;background:#dfe0f0"></div>
<svg class="abs" style="left:507px;top:25px;overflow:hidden" width="513" height="664" viewBox="900 130 513 664">
<rect x="900" y="130" width="513" height="664" fill="#24c894"/>
<path d="M1397.0 118.0C1395.7 120.0 1396.5 120.0 1389.0 130.0C1381.5 140.0 1363.5 162.2 1352.0 178.0C1340.5 193.8 1329.0 211.0 1320.0 225.0C1311.0 239.0 1304.5 249.3 1298.0 262.0C1291.5 274.7 1286.7 284.7 1281.0 301.0C1275.3 317.3 1269.2 336.8 1264.0 360.0C1258.8 383.2 1253.8 415.0 1250.0 440.0C1246.2 465.0 1243.8 490.1 1241.0 510.0C1238.2 529.9 1238.2 541.4 1233.5 559.5C1228.8 577.6 1222.3 599.8 1213.0 618.5C1203.7 637.2 1191.8 653.9 1177.5 671.6C1163.2 689.3 1145.2 709.5 1127.0 724.7C1108.8 739.9 1084.2 754.4 1068.0 763.0C1051.8 771.6 1046.5 771.1 1030.0 776.3C1013.5 781.5 985.7 789.5 969.0 794.0C952.3 798.5 936.5 801.5 930.0 803.0L930 830L1440 830L1440 100L1397 100Z" fill="#f05050"/>
<path d="M1424.0 198.0C1422.3 200.2 1418.4 204.7 1413.6 211.0C1408.8 217.3 1401.1 227.3 1395.0 236.0C1388.9 244.7 1382.0 255.7 1377.0 263.0C1372.0 270.3 1369.0 273.7 1365.0 280.0C1361.0 286.3 1356.7 293.9 1353.0 301.0C1349.3 308.1 1345.5 315.3 1342.7 322.6C1339.9 329.9 1338.0 337.4 1336.0 345.0C1334.0 352.6 1333.3 353.8 1331.0 368.0C1328.7 382.2 1325.0 406.3 1322.0 430.0C1319.0 453.7 1315.8 485.0 1313.0 510.0C1310.2 535.0 1308.2 560.9 1305.0 580.0C1301.8 599.1 1297.5 614.6 1294.0 624.4C1290.5 634.2 1291.0 627.2 1283.7 639.0C1276.4 650.8 1262.3 677.8 1250.0 695.0C1237.7 712.2 1223.1 729.6 1210.0 742.4C1196.9 755.2 1183.9 763.5 1171.6 771.9C1159.3 780.2 1146.3 786.8 1136.0 792.5C1125.7 798.2 1114.3 803.8 1110.0 806.0L1110 830L1440 830L1440 100L1424 100Z" fill="#ff9466"/>
<path d="M1418.0 385.0C1417.2 387.2 1414.7 392.5 1413.0 398.0C1411.3 403.5 1409.7 410.5 1408.0 418.0C1406.3 425.5 1404.2 434.2 1403.0 443.0C1401.8 451.8 1401.2 462.2 1400.6 471.0C1400.0 479.8 1400.2 481.2 1399.4 496.0C1398.6 510.8 1398.9 537.7 1396.0 560.0C1393.1 582.3 1388.3 609.2 1382.0 630.0C1375.7 650.8 1366.5 669.0 1358.0 685.0C1349.5 701.0 1340.3 713.0 1330.9 726.0C1321.5 739.0 1312.2 751.9 1301.4 763.0C1290.6 774.1 1274.6 785.3 1266.0 792.5C1257.4 799.7 1252.7 803.8 1250.0 806.0L1250 830L1440 830L1440 100L1418 100Z" fill="#ffff6e"/>
<text x="924" y="227.5" textLength="283" lengthAdjust="spacingAndGlyphs" font-family="Liberation Sans, sans-serif" font-weight="700" font-size="99" fill="#fff" stroke="#fff" stroke-width="3.500" stroke-linejoin="round" transform="translate(-3.200 1.600)">Ex<tspan font-size="73.3" dy="-15.0">p</tspan><tspan dy="15.0">lore</tspan></text>
<text x="924" y="227.5" textLength="283" lengthAdjust="spacingAndGlyphs" font-family="Liberation Sans, sans-serif" font-weight="700" font-size="99" fill="#24c894" stroke="#24c894" stroke-width="3.500" stroke-linejoin="round" transform="translate(-1.200 .6)">Ex<tspan font-size="73.3" dy="-15.0">p</tspan><tspan dy="15.0">lore</tspan></text>
<text x="924" y="227.5" textLength="283" lengthAdjust="spacingAndGlyphs" font-family="Liberation Sans, sans-serif" font-weight="700" font-size="99" fill="#ffff6e" stroke="#ffff6e" stroke-width="1.400" stroke-linejoin="round">Ex<tspan font-size="73.3" dy="-15.0">p</tspan><tspan dy="15.0">lore</tspan></text>
<text x="924" y="310.5" textLength="359" lengthAdjust="spacingAndGlyphs" font-family="Liberation Sans, sans-serif" font-weight="700" font-size="98" fill="#fff" stroke="#fff" stroke-width="3.500" stroke-linejoin="round" transform="translate(-3.200 1.600)">Ma<tspan font-size="72.5" dy="-14.9">g</tspan><tspan dy="14.9">azine</tspan></text>
<text x="924" y="310.5" textLength="359" lengthAdjust="spacingAndGlyphs" font-family="Liberation Sans, sans-serif" font-weight="700" font-size="98" fill="#24c894" stroke="#24c894" stroke-width="3.500" stroke-linejoin="round" transform="translate(-1.200 .6)">Ma<tspan font-size="72.5" dy="-14.9">g</tspan><tspan dy="14.9">azine</tspan></text>
<text x="924" y="310.5" textLength="359" lengthAdjust="spacingAndGlyphs" font-family="Liberation Sans, sans-serif" font-weight="700" font-size="98" fill="#ffff6e" stroke="#ffff6e" stroke-width="1.400" stroke-linejoin="round">Ma<tspan font-size="72.5" dy="-14.9">g</tspan><tspan dy="14.9">azine</tspan></text>
<defs><clipPath id="gclip"><path d="M1053.6 530.9C1054.5 527.4 1054.1 528.3 1058.0 523.9C1061.9 519.5 1072.0 510.7 1077.2 504.7C1082.5 498.7 1085.1 491.3 1089.5 488.1C1093.9 484.9 1098.8 487.7 1103.4 485.5C1108.1 483.3 1113.3 478.8 1117.4 475.0C1121.5 471.2 1123.8 466.8 1127.9 462.7C1132.0 458.6 1137.4 454.4 1141.9 450.5C1146.4 446.6 1151.4 442.8 1155.0 439.0C1158.6 435.2 1162.9 431.1 1163.6 427.8C1164.3 424.5 1158.8 421.9 1159.3 419.3C1159.8 416.7 1164.3 414.3 1166.4 412.2C1168.5 410.1 1173.1 411.0 1172.0 406.5C1170.9 402.0 1163.7 391.9 1160.0 385.0C1156.3 378.1 1152.2 370.3 1150.0 365.0C1147.8 359.7 1145.7 355.2 1147.0 353.3C1148.3 351.4 1151.0 352.2 1158.0 353.3C1165.0 354.4 1180.0 357.2 1189.0 359.6C1198.0 362.1 1207.0 367.1 1212.0 368.0C1217.0 368.9 1216.2 369.6 1219.0 365.3C1221.8 361.1 1225.5 351.1 1229.0 342.5C1232.5 333.9 1236.7 320.4 1240.0 314.0C1243.3 307.6 1245.2 305.2 1249.0 304.0C1252.8 302.8 1258.8 304.4 1263.0 307.0C1267.2 309.6 1273.0 314.8 1274.0 319.8C1275.0 324.8 1269.9 330.3 1268.8 336.9C1267.7 343.5 1266.0 355.1 1267.4 359.6C1268.8 364.1 1274.2 365.8 1277.3 363.9C1280.4 362.0 1282.0 354.4 1285.8 348.2C1289.6 342.0 1296.0 331.2 1300.0 326.9C1304.0 322.6 1306.4 320.2 1310.0 322.6C1313.6 325.0 1321.2 335.4 1321.4 341.1C1321.6 346.8 1314.5 350.8 1311.4 356.7C1308.3 362.6 1304.1 371.6 1302.9 376.6C1301.7 381.6 1301.7 384.7 1304.0 386.6C1306.3 388.5 1313.4 389.4 1317.0 388.0C1320.6 386.6 1322.1 379.9 1325.6 378.0C1329.0 376.1 1334.6 372.9 1337.7 376.5C1340.8 380.1 1342.3 389.9 1344.0 399.4C1345.7 408.9 1346.6 425.9 1347.8 433.5C1349.0 441.1 1348.1 441.2 1351.0 444.9C1353.9 448.6 1360.1 449.8 1365.4 455.8C1370.7 461.8 1377.1 472.6 1383.0 481.0C1388.9 489.4 1395.6 498.1 1400.6 506.0C1405.6 514.0 1406.4 519.7 1413.0 528.7C1419.6 537.7 1435.5 509.8 1440.0 560.0C1444.5 610.2 1450.0 785.0 1440.0 830.0C1430.0 875.0 1392.7 836.0 1380.0 830.0C1367.3 824.0 1368.2 803.7 1364.0 794.0C1359.8 784.3 1359.0 782.5 1354.5 771.9C1350.0 761.3 1341.7 743.4 1336.8 730.6C1331.9 717.8 1329.0 707.3 1325.0 695.0C1321.0 682.7 1316.9 669.5 1313.0 656.8C1309.1 644.0 1305.4 630.5 1301.4 618.5C1297.4 606.5 1292.4 593.9 1288.8 585.1C1285.2 576.3 1282.6 571.1 1280.0 565.9C1277.4 560.7 1275.7 556.2 1273.1 553.7C1270.5 551.2 1271.3 550.4 1264.3 551.0C1257.3 551.6 1241.0 555.6 1231.1 557.2C1221.2 558.8 1213.4 560.4 1204.9 560.7C1196.5 561.0 1189.2 558.9 1180.4 558.9C1171.7 558.9 1160.6 560.1 1152.4 560.7C1144.2 561.3 1136.7 561.0 1131.4 562.4C1126.2 563.8 1125.3 566.8 1120.9 569.4C1116.5 572.0 1110.7 576.6 1105.2 578.1C1099.7 579.6 1093.5 579.6 1087.7 578.1C1081.9 576.6 1074.3 570.3 1070.2 569.4C1066.1 568.5 1067.0 570.3 1063.2 572.9C1059.4 575.5 1050.8 585.1 1047.5 585.1C1044.2 585.1 1043.4 578.1 1043.1 572.9C1042.8 567.7 1044.1 558.4 1045.7 553.7C1047.3 549.0 1051.4 548.7 1052.7 544.9C1054.0 541.1 1052.7 534.4 1053.6 530.9Z"/></clipPath><radialGradient id="gSn" cx=".5" cy=".5" r=".5"><stop offset="0" stop-color="#a4541a"/><stop offset=".6" stop-color="#a85a1e" stop-opacity=".95"/><stop offset="1" stop-color="#b06425" stop-opacity="0"/></radialGradient><radialGradient id="gLt" cx=".5" cy=".5" r=".5"><stop offset="0" stop-color="#ecd0ac"/><stop offset=".55" stop-color="#e4bf95" stop-opacity=".9"/><stop offset="1" stop-color="#ddb184" stop-opacity="0"/></radialGradient><radialGradient id="gFh" cx=".5" cy=".5" r=".5"><stop offset="0" stop-color="#a5642c"/><stop offset=".7" stop-color="#ab6a31" stop-opacity=".9"/><stop offset="1" stop-color="#b5743a" stop-opacity="0"/></radialGradient></defs>
<path d="M1053.6 530.9C1054.5 527.4 1054.1 528.3 1058.0 523.9C1061.9 519.5 1072.0 510.7 1077.2 504.7C1082.5 498.7 1085.1 491.3 1089.5 488.1C1093.9 484.9 1098.8 487.7 1103.4 485.5C1108.1 483.3 1113.3 478.8 1117.4 475.0C1121.5 471.2 1123.8 466.8 1127.9 462.7C1132.0 458.6 1137.4 454.4 1141.9 450.5C1146.4 446.6 1151.4 442.8 1155.0 439.0C1158.6 435.2 1162.9 431.1 1163.6 427.8C1164.3 424.5 1158.8 421.9 1159.3 419.3C1159.8 416.7 1164.3 414.3 1166.4 412.2C1168.5 410.1 1173.1 411.0 1172.0 406.5C1170.9 402.0 1163.7 391.9 1160.0 385.0C1156.3 378.1 1152.2 370.3 1150.0 365.0C1147.8 359.7 1145.7 355.2 1147.0 353.3C1148.3 351.4 1151.0 352.2 1158.0 353.3C1165.0 354.4 1180.0 357.2 1189.0 359.6C1198.0 362.1 1207.0 367.1 1212.0 368.0C1217.0 368.9 1216.2 369.6 1219.0 365.3C1221.8 361.1 1225.5 351.1 1229.0 342.5C1232.5 333.9 1236.7 320.4 1240.0 314.0C1243.3 307.6 1245.2 305.2 1249.0 304.0C1252.8 302.8 1258.8 304.4 1263.0 307.0C1267.2 309.6 1273.0 314.8 1274.0 319.8C1275.0 324.8 1269.9 330.3 1268.8 336.9C1267.7 343.5 1266.0 355.1 1267.4 359.6C1268.8 364.1 1274.2 365.8 1277.3 363.9C1280.4 362.0 1282.0 354.4 1285.8 348.2C1289.6 342.0 1296.0 331.2 1300.0 326.9C1304.0 322.6 1306.4 320.2 1310.0 322.6C1313.6 325.0 1321.2 335.4 1321.4 341.1C1321.6 346.8 1314.5 350.8 1311.4 356.7C1308.3 362.6 1304.1 371.6 1302.9 376.6C1301.7 381.6 1301.7 384.7 1304.0 386.6C1306.3 388.5 1313.4 389.4 1317.0 388.0C1320.6 386.6 1322.1 379.9 1325.6 378.0C1329.0 376.1 1334.6 372.9 1337.7 376.5C1340.8 380.1 1342.3 389.9 1344.0 399.4C1345.7 408.9 1346.6 425.9 1347.8 433.5C1349.0 441.1 1348.1 441.2 1351.0 444.9C1353.9 448.6 1360.1 449.8 1365.4 455.8C1370.7 461.8 1377.1 472.6 1383.0 481.0C1388.9 489.4 1395.6 498.1 1400.6 506.0C1405.6 514.0 1406.4 519.7 1413.0 528.7C1419.6 537.7 1435.5 509.8 1440.0 560.0C1444.5 610.2 1450.0 785.0 1440.0 830.0C1430.0 875.0 1392.7 836.0 1380.0 830.0C1367.3 824.0 1368.2 803.7 1364.0 794.0C1359.8 784.3 1359.0 782.5 1354.5 771.9C1350.0 761.3 1341.7 743.4 1336.8 730.6C1331.9 717.8 1329.0 707.3 1325.0 695.0C1321.0 682.7 1316.9 669.5 1313.0 656.8C1309.1 644.0 1305.4 630.5 1301.4 618.5C1297.4 606.5 1292.4 593.9 1288.8 585.1C1285.2 576.3 1282.6 571.1 1280.0 565.9C1277.4 560.7 1275.7 556.2 1273.1 553.7C1270.5 551.2 1271.3 550.4 1264.3 551.0C1257.3 551.6 1241.0 555.6 1231.1 557.2C1221.2 558.8 1213.4 560.4 1204.9 560.7C1196.5 561.0 1189.2 558.9 1180.4 558.9C1171.7 558.9 1160.6 560.1 1152.4 560.7C1144.2 561.3 1136.7 561.0 1131.4 562.4C1126.2 563.8 1125.3 566.8 1120.9 569.4C1116.5 572.0 1110.7 576.6 1105.2 578.1C1099.7 579.6 1093.5 579.6 1087.7 578.1C1081.9 576.6 1074.3 570.3 1070.2 569.4C1066.1 568.5 1067.0 570.3 1063.2 572.9C1059.4 575.5 1050.8 585.1 1047.5 585.1C1044.2 585.1 1043.4 578.1 1043.1 572.9C1042.8 567.7 1044.1 558.4 1045.7 553.7C1047.3 549.0 1051.4 548.7 1052.7 544.9C1054.0 541.1 1052.7 534.4 1053.6 530.9Z" fill="#c0844a" stroke="#fff" stroke-width="1.600" stroke-opacity=".85" stroke-linejoin="round"/>
<g clip-path="url(#gclip)"><path d="M1262.0 548.0L1300.0 470.0L1345.0 440.0L1372.0 500.0L1400.0 560.0L1440.0 600.0L1440.0 830.0L1364.0 830.0L1325.0 695.0L1288.0 585.0Z" fill="#e3c097"/>
<ellipse cx="1232" cy="514" rx="66" ry="46" fill="url(#gLt)"/>
<ellipse cx="1262" cy="466" rx="40" ry="26" fill="url(#gLt)"/>
<ellipse cx="1160" cy="548" rx="42" ry="16" fill="url(#gLt)"/>
<ellipse cx="1215" cy="405" rx="75" ry="48" fill="url(#gFh)"/>
<ellipse cx="1150" cy="478" rx="48" ry="40" fill="url(#gFh)" transform="rotate(-40 1150 478)"/>
<ellipse cx="1090" cy="532" rx="62" ry="44" fill="url(#gSn)" transform="rotate(-25 1090 532)"/>
<ellipse cx="1098" cy="568" rx="40" ry="16" fill="#8e4414" opacity=".8"/>
<ellipse cx="1256" cy="311" rx="17" ry="10" fill="#45362f" transform="rotate(15 1256 311)"/>
<ellipse cx="1311" cy="330" rx="13" ry="9" fill="#45362f" transform="rotate(35 1311 330)"/>
<path d="M1232.0 338.0L1244.0 316.0L1268.0 324.0L1266.0 360.0L1222.0 362.0Z" fill="#b36f30"/>
<path d="M1288.0 346.0L1300.0 332.0L1316.0 346.0L1303.0 376.0L1280.0 364.0Z" fill="#b36f30"/>
<path d="M1152.0 357.0L1185.0 364.0L1204.0 372.0L1178.0 400.0L1166.0 384.0Z" fill="#b99070"/>
<path d="M1158.0 362.0L1180.0 368.0L1196.0 376.0L1176.0 394.0Z" fill="#8d6c58"/>
<path d="M1322.0 384.0L1338.0 380.0L1344.0 410.0L1346.0 436.0L1332.0 452.0L1316.0 440.0L1312.0 410.0Z" fill="#c9a483"/>
<path d="M1326.0 390.0L1336.0 386.0L1338.0 412.0L1330.0 432.0L1320.0 420.0Z" fill="#8a6248"/>
<path d="M1344.0 440.0L1366.0 452.0L1384.0 478.0L1402.0 504.0L1440.0 540.0L1440.0 640.0L1400.0 600.0L1385.8 570.0L1378.0 539.5L1360.0 495.0L1342.5 457.0Z" fill="#9f6a3b"/>
<ellipse cx="1259" cy="460" rx="19" ry="10.5" fill="#1c100c" transform="rotate(14 1259 460)"/>
<ellipse cx="1262" cy="461" rx="8" ry="5" fill="#5a2a18" transform="rotate(14 1262 461)"/>
<path d="M1236 447c12-7 30-5 44 7" stroke="#f0dcc4" stroke-width="5" fill="none" opacity=".8"/>
<path d="M1230 436c14-9 36-6 52 8" stroke="#9c6233" stroke-width="6" fill="none" opacity=".7"/>
<ellipse cx="1107" cy="503" rx="10" ry="3.600" fill="#3a1c0e" transform="rotate(-14 1107 503)"/>
<path d="M1092 508c2-12 22-16 32-6" stroke="#8a4516" stroke-width="3" fill="none" opacity=".7"/>
<path d="M1056 546c20 8 50 6 72-4" stroke="#6b3210" stroke-width="2.500" fill="none" opacity=".8"/>
<path d="M1284.9 495.2C1285.7 497.3 1286.3 500.1 1285.9 501.8C1285.5 503.5 1284.8 504.2 1282.6 505.4C1280.4 506.6 1275.1 508.5 1272.6 509.0C1270.1 509.5 1269.1 509.4 1267.8 508.4C1266.4 507.3 1265.0 504.8 1264.3 502.8C1263.5 500.7 1262.9 497.9 1263.3 496.2C1263.7 494.5 1264.4 493.8 1266.6 492.6C1268.8 491.4 1274.1 489.5 1276.6 489.0C1279.1 488.5 1280.1 488.6 1281.4 489.6C1282.8 490.7 1284.2 493.2 1284.9 495.2Z" fill="#9a5923"/>
<path d="M1248.4 509.8C1249.9 513.1 1251.4 517.7 1251.1 520.5C1250.8 523.3 1249.8 524.5 1246.6 526.7C1243.4 528.9 1235.5 532.6 1231.7 533.6C1228.0 534.7 1226.4 534.7 1224.0 533.1C1221.7 531.5 1219.1 527.4 1217.6 524.2C1216.1 520.9 1214.6 516.3 1214.9 513.5C1215.2 510.7 1216.2 509.5 1219.4 507.3C1222.6 505.1 1230.5 501.4 1234.3 500.4C1238.0 499.3 1239.6 499.3 1242.0 500.9C1244.3 502.5 1246.9 506.6 1248.4 509.8Z" fill="#9a5923"/>
<path d="M1271.6 520.2C1272.0 521.7 1272.2 523.8 1271.5 525.0C1270.9 526.3 1270.1 526.8 1267.8 527.7C1265.4 528.6 1260.0 530.1 1257.5 530.5C1255.0 530.8 1254.1 530.8 1252.9 530.0C1251.7 529.2 1250.8 527.4 1250.4 525.8C1250.0 524.3 1249.8 522.2 1250.5 521.0C1251.1 519.7 1251.9 519.2 1254.2 518.3C1256.6 517.4 1262.0 515.9 1264.5 515.5C1267.0 515.2 1267.9 515.2 1269.1 516.0C1270.3 516.8 1271.2 518.6 1271.6 520.2Z" fill="#9a5923"/>
<path d="M1289.2 529.3C1289.9 531.6 1290.3 534.8 1289.4 536.8C1288.5 538.8 1287.3 539.7 1283.8 541.3C1280.3 542.9 1272.0 545.6 1268.2 546.4C1264.4 547.1 1262.9 547.1 1261.0 546.0C1259.2 545.0 1257.6 542.1 1256.8 539.9C1256.1 537.6 1255.7 534.4 1256.6 532.4C1257.5 530.4 1258.7 529.5 1262.2 527.9C1265.7 526.3 1274.0 523.6 1277.8 522.8C1281.6 522.1 1283.1 522.1 1285.0 523.2C1286.8 524.2 1288.4 527.1 1289.2 529.3Z" fill="#9a5923"/>
<path d="M1212.6 510.4C1212.1 513.0 1211.2 516.4 1210.2 518.0C1209.2 519.6 1208.5 520.0 1206.7 520.2C1204.8 520.3 1200.8 519.6 1199.0 518.8C1197.3 518.1 1196.8 517.4 1196.4 515.6C1196.0 513.7 1196.4 510.2 1196.8 507.6C1197.3 505.0 1198.2 501.6 1199.2 500.0C1200.2 498.4 1200.9 498.0 1202.7 497.8C1204.6 497.7 1208.6 498.4 1210.4 499.2C1212.1 499.9 1212.6 500.6 1213.0 502.4C1213.4 504.3 1213.0 507.8 1212.6 510.4Z" fill="#9a5923"/>
<path d="M1190.9 474.6C1190.4 478.1 1189.5 482.6 1188.5 484.8C1187.5 487.0 1186.7 487.6 1184.9 488.0C1183.0 488.3 1178.9 487.7 1177.2 486.9C1175.5 486.0 1175.0 485.3 1174.6 482.9C1174.2 480.4 1174.6 475.8 1175.1 472.4C1175.6 468.9 1176.5 464.4 1177.5 462.2C1178.5 460.0 1179.3 459.4 1181.1 459.0C1183.0 458.7 1187.1 459.3 1188.8 460.1C1190.5 461.0 1191.0 461.7 1191.4 464.1C1191.8 466.6 1191.4 471.2 1190.9 474.6Z" fill="#9a5923"/>
<path d="M1189.0 511.8C1188.7 515.4 1187.9 520.1 1186.9 522.4C1185.9 524.8 1185.1 525.4 1183.1 525.9C1181.0 526.3 1176.4 525.9 1174.4 525.1C1172.4 524.3 1171.8 523.5 1171.2 521.1C1170.6 518.6 1170.7 513.8 1171.0 510.2C1171.3 506.6 1172.1 501.9 1173.1 499.6C1174.1 497.2 1174.9 496.6 1176.9 496.1C1179.0 495.7 1183.6 496.1 1185.6 496.9C1187.6 497.7 1188.2 498.5 1188.8 500.9C1189.4 503.4 1189.3 508.2 1189.0 511.8Z" fill="#9a5923"/>
<path d="M1168.9 477.1C1169.9 479.8 1170.8 483.5 1170.7 485.6C1170.5 487.7 1170.0 488.5 1168.0 489.8C1166.1 491.0 1161.2 492.8 1158.9 493.1C1156.6 493.4 1155.7 493.1 1154.2 491.6C1152.7 490.1 1151.1 486.6 1150.1 483.9C1149.1 481.2 1148.2 477.5 1148.3 475.4C1148.5 473.3 1149.0 472.5 1151.0 471.2C1152.9 470.0 1157.8 468.2 1160.1 467.9C1162.4 467.6 1163.3 467.9 1164.8 469.4C1166.3 470.9 1167.9 474.4 1168.9 477.1Z" fill="#9a5923"/>
<path d="M1169.5 522.0C1169.5 524.4 1169.1 527.6 1168.0 529.2C1167.0 530.8 1166.0 531.3 1163.3 531.7C1160.6 532.1 1154.4 532.1 1151.7 531.7C1149.0 531.3 1148.0 530.8 1147.0 529.2C1145.9 527.6 1145.5 524.4 1145.5 522.0C1145.5 519.6 1145.9 516.4 1147.0 514.8C1148.0 513.2 1149.0 512.7 1151.7 512.3C1154.4 511.9 1160.6 511.9 1163.3 512.3C1166.0 512.7 1167.0 513.2 1168.0 514.8C1169.1 516.4 1169.5 519.6 1169.5 522.0Z" fill="#9a5923"/>
<path d="M1209.0 538.6C1209.1 540.5 1209.0 543.1 1208.2 544.5C1207.5 545.8 1206.7 546.3 1204.5 546.8C1202.3 547.3 1197.2 547.8 1194.9 547.6C1192.6 547.5 1191.7 547.2 1190.8 546.0C1189.8 544.8 1189.2 542.3 1189.0 540.4C1188.9 538.5 1189.0 535.9 1189.8 534.5C1190.5 533.2 1191.3 532.7 1193.5 532.2C1195.7 531.7 1200.8 531.2 1203.1 531.4C1205.4 531.5 1206.3 531.8 1207.2 533.0C1208.2 534.2 1208.8 536.7 1209.0 538.6Z" fill="#9a5923"/>
<path d="M1244.0 544.5C1244.0 546.7 1243.7 549.5 1242.9 551.0C1242.1 552.4 1241.4 552.8 1239.3 553.2C1237.3 553.6 1232.7 553.6 1230.7 553.2C1228.6 552.8 1227.9 552.4 1227.1 551.0C1226.3 549.5 1226.0 546.7 1226.0 544.5C1226.0 542.3 1226.3 539.5 1227.1 538.0C1227.9 536.6 1228.6 536.2 1230.7 535.8C1232.7 535.4 1237.3 535.4 1239.3 535.8C1241.4 536.2 1242.1 536.6 1242.9 538.0C1243.7 539.5 1244.0 542.3 1244.0 544.5Z" fill="#9a5923"/>
<path d="M1218.6 550.0C1218.6 551.7 1218.4 553.9 1217.9 555.0C1217.3 556.2 1216.9 556.5 1215.5 556.8C1214.1 557.1 1211.1 557.1 1209.7 556.8C1208.3 556.5 1207.9 556.2 1207.3 555.0C1206.8 553.9 1206.6 551.7 1206.6 550.0C1206.6 548.3 1206.8 546.1 1207.3 545.0C1207.9 543.8 1208.3 543.5 1209.7 543.2C1211.1 542.9 1214.1 542.9 1215.5 543.2C1216.9 543.5 1217.3 543.8 1217.9 545.0C1218.4 546.1 1218.6 548.3 1218.6 550.0Z" fill="#9a5923"/>
<path d="M1212.8 447.5C1213.6 449.0 1214.5 451.0 1214.4 452.4C1214.2 453.8 1213.8 454.4 1212.2 455.7C1210.5 457.0 1206.5 459.3 1204.6 460.0C1202.7 460.8 1201.9 460.9 1200.7 460.3C1199.4 459.7 1198.0 458.0 1197.2 456.5C1196.4 455.0 1195.5 453.0 1195.6 451.6C1195.8 450.2 1196.2 449.6 1197.8 448.3C1199.5 447.0 1203.5 444.7 1205.4 444.0C1207.3 443.2 1208.1 443.1 1209.3 443.7C1210.6 444.3 1212.0 446.0 1212.8 447.5Z" fill="#9a5923"/>
<path d="M1194.6 435.4C1195.4 436.6 1196.2 438.3 1196.2 439.5C1196.2 440.7 1195.8 441.3 1194.5 442.5C1193.2 443.8 1189.8 446.1 1188.2 447.0C1186.5 447.8 1185.9 448.0 1184.7 447.6C1183.6 447.2 1182.3 445.8 1181.4 444.6C1180.6 443.4 1179.8 441.7 1179.8 440.5C1179.8 439.3 1180.2 438.7 1181.5 437.5C1182.8 436.2 1186.2 433.9 1187.8 433.0C1189.5 432.2 1190.1 432.0 1191.3 432.4C1192.4 432.8 1193.7 434.2 1194.6 435.4Z" fill="#9a5923"/>
<path d="M1235.4 432.6C1235.9 433.9 1236.2 435.9 1235.7 437.1C1235.2 438.3 1234.6 438.8 1232.5 439.8C1230.5 440.8 1225.7 442.6 1223.5 443.1C1221.2 443.7 1220.4 443.7 1219.2 443.1C1218.1 442.4 1217.1 440.8 1216.6 439.4C1216.1 438.1 1215.8 436.1 1216.3 434.9C1216.8 433.7 1217.4 433.2 1219.5 432.2C1221.5 431.2 1226.3 429.4 1228.5 428.9C1230.8 428.3 1231.6 428.3 1232.8 428.9C1233.9 429.6 1234.9 431.2 1235.4 432.6Z" fill="#9a5923"/>
<path d="M1173.7 448.0C1174.6 449.2 1175.4 450.9 1175.5 452.0C1175.6 453.2 1175.3 453.7 1174.1 454.8C1172.9 455.9 1170.0 458.0 1168.6 458.7C1167.1 459.4 1166.5 459.5 1165.4 459.1C1164.4 458.6 1163.1 457.2 1162.3 456.0C1161.4 454.8 1160.6 453.1 1160.5 452.0C1160.4 450.8 1160.7 450.3 1161.9 449.2C1163.1 448.1 1166.0 446.0 1167.4 445.3C1168.9 444.6 1169.5 444.5 1170.6 444.9C1171.6 445.4 1172.9 446.8 1173.7 448.0Z" fill="#9a5923"/>
<path d="M1147.7 474.0C1148.8 475.6 1150.1 477.8 1150.3 479.2C1150.6 480.6 1150.3 481.2 1149.2 482.4C1148.1 483.6 1145.2 485.7 1143.7 486.3C1142.2 486.9 1141.5 486.9 1140.3 486.2C1139.0 485.5 1137.4 483.6 1136.3 482.0C1135.2 480.4 1133.9 478.2 1133.7 476.8C1133.4 475.4 1133.7 474.8 1134.8 473.6C1135.9 472.4 1138.8 470.3 1140.3 469.7C1141.8 469.1 1142.5 469.1 1143.7 469.8C1145.0 470.5 1146.6 472.4 1147.7 474.0Z" fill="#9a5923"/>
<path d="M1132.9 488.6C1133.9 489.9 1135.0 491.9 1135.2 493.1C1135.4 494.3 1135.2 494.9 1134.3 495.9C1133.3 496.9 1130.8 498.7 1129.5 499.2C1128.2 499.8 1127.7 499.8 1126.6 499.1C1125.5 498.5 1124.0 496.8 1123.1 495.4C1122.1 494.1 1121.0 492.1 1120.8 490.9C1120.6 489.7 1120.8 489.1 1121.7 488.1C1122.7 487.1 1125.2 485.3 1126.5 484.8C1127.8 484.2 1128.3 484.2 1129.4 484.9C1130.5 485.5 1132.0 487.2 1132.9 488.6Z" fill="#9a5923"/>
<path d="M1222.9 473.6C1223.2 475.3 1223.3 477.5 1222.8 478.7C1222.3 480.0 1221.7 480.4 1220.0 481.0C1218.2 481.6 1214.2 482.3 1212.4 482.4C1210.5 482.4 1209.8 482.2 1209.0 481.2C1208.1 480.2 1207.4 478.0 1207.1 476.4C1206.8 474.7 1206.7 472.5 1207.2 471.3C1207.7 470.0 1208.3 469.6 1210.0 469.0C1211.8 468.4 1215.8 467.7 1217.6 467.6C1219.5 467.6 1220.2 467.8 1221.0 468.8C1221.9 469.8 1222.6 472.0 1222.9 473.6Z" fill="#9a5923"/>
<path d="M1243.0 482.0C1243.0 483.2 1242.7 484.8 1242.1 485.6C1241.5 486.4 1241.0 486.6 1239.4 486.8C1237.8 487.1 1234.2 487.1 1232.6 486.8C1231.0 486.6 1230.5 486.4 1229.9 485.6C1229.3 484.8 1229.0 483.2 1229.0 482.0C1229.0 480.8 1229.3 479.2 1229.9 478.4C1230.5 477.6 1231.0 477.4 1232.6 477.2C1234.2 476.9 1237.8 476.9 1239.4 477.2C1241.0 477.4 1241.5 477.6 1242.1 478.4C1242.7 479.2 1243.0 480.8 1243.0 482.0Z" fill="#9a5923"/>
<path d="M1316.6 532.2C1321.9 527.1 1333.4 526.1 1338.0 529.2C1342.6 532.3 1344.9 543.5 1344.1 550.6C1343.3 557.7 1338.0 567.9 1333.4 572.0C1328.8 576.1 1321.2 577.1 1316.6 575.1C1312.0 573.1 1305.9 566.9 1305.9 559.8C1305.9 552.6 1311.2 537.3 1316.6 532.2Z" fill="#9a5a25"/>
<path d="M1290.6 579.7C1293.1 576.4 1304.2 579.4 1309.0 582.7C1313.8 586.0 1319.0 593.2 1319.7 599.6C1320.5 606.0 1316.3 616.9 1313.5 621.0C1310.7 625.1 1306.1 627.1 1302.8 624.0C1299.5 620.9 1295.7 610.0 1293.7 602.6C1291.7 595.2 1288.0 583.0 1290.6 579.7Z" fill="#9a5a25"/>
<path d="M1351.8 556.7C1356.4 553.1 1366.1 558.8 1370.2 565.9C1374.3 573.0 1375.8 589.9 1376.3 599.6C1376.8 609.3 1375.8 618.4 1373.2 624.0C1370.7 629.6 1362.8 628.1 1361.0 633.2C1359.2 638.3 1364.5 650.0 1362.5 654.6C1360.5 659.2 1354.3 660.8 1348.7 660.8C1343.1 660.8 1332.6 657.7 1328.8 654.6C1325.0 651.5 1324.0 648.0 1325.8 642.4C1327.6 636.8 1336.8 630.2 1339.6 621.0C1342.4 611.8 1340.6 598.0 1342.6 587.3C1344.6 576.6 1347.2 560.3 1351.8 556.7Z" fill="#9a5a25"/>
<path d="M1351.8 516.0C1354.8 512.3 1369.1 511.2 1373.2 516.0C1377.3 520.8 1377.8 538.7 1376.3 544.5C1374.8 550.3 1367.6 551.6 1364.0 550.6C1360.4 549.6 1356.9 544.2 1354.9 538.4C1352.9 532.6 1348.8 519.7 1351.8 516.0Z" fill="#9a5a25"/>
<path d="M1376.3 556.7C1377.6 548.5 1382.6 542.4 1388.5 550.6C1394.4 558.8 1406.2 593.0 1411.5 605.7C1416.8 618.5 1423.8 623.5 1420.0 627.1C1416.2 630.7 1395.0 631.7 1388.5 627.1C1382.0 622.5 1382.9 611.3 1380.9 599.6C1378.9 587.9 1375.0 564.9 1376.3 556.7Z" fill="#9a5a25"/>
<path d="M1388.5 636.3C1394.0 633.2 1414.8 622.5 1420.0 633.2C1425.2 643.9 1422.7 688.8 1420.0 700.5C1417.3 712.2 1408.5 708.2 1403.8 703.6C1399.1 699.0 1394.4 681.7 1391.6 673.0C1388.8 664.3 1387.5 657.7 1387.0 651.6C1386.5 645.5 1383.0 639.4 1388.5 636.3Z" fill="#9a5a25"/>
<path d="M1333.4 682.2C1337.0 674.6 1352.8 673.0 1361.0 669.9C1369.2 666.8 1376.8 660.2 1382.4 663.8C1388.0 667.4 1390.8 682.2 1394.6 691.4C1398.4 700.6 1403.8 710.8 1405.3 718.9C1406.8 727.0 1406.6 734.7 1403.8 740.3C1401.0 745.9 1394.6 749.5 1388.5 752.6C1382.4 755.7 1373.2 760.8 1367.1 758.7C1361.0 756.7 1356.4 747.4 1351.8 740.3C1347.2 733.1 1342.7 725.5 1339.6 715.8C1336.5 706.1 1329.8 689.9 1333.4 682.2Z" fill="#9a5a25"/>
<path d="M1305.9 642.4C1307.9 643.4 1317.9 657.2 1321.2 663.8C1324.5 670.4 1326.3 679.7 1325.8 682.2C1325.3 684.8 1320.9 683.2 1318.1 679.1C1315.3 675.0 1311.0 663.8 1309.0 657.7C1307.0 651.6 1303.9 641.4 1305.9 642.4Z" fill="#9a5a25"/>
<path d="M1367.1 764.8C1372.2 761.8 1382.8 763.2 1391.6 761.7C1400.4 760.2 1415.3 747.6 1420.0 755.6C1424.7 763.6 1426.3 800.9 1420.0 810.0C1413.7 819.1 1392.2 815.0 1382.4 810.0C1372.6 805.0 1363.5 787.5 1361.0 780.0C1358.5 772.5 1362.0 767.8 1367.1 764.8Z" fill="#9a5a25"/>
<path d="M1406.9 709.7C1409.1 703.1 1417.8 700.1 1420.0 706.7C1422.2 713.3 1422.2 742.9 1420.0 749.5C1417.8 756.1 1409.1 753.0 1406.9 746.4C1404.7 739.8 1404.7 716.3 1406.9 709.7Z" fill="#9a5a25"/>
<path d="M1339.6 728.0C1341.1 728.5 1348.2 743.9 1351.8 752.6C1355.4 761.3 1361.0 776.4 1361.0 780.0C1361.0 783.6 1354.9 779.1 1351.8 774.0C1348.7 768.9 1344.6 757.2 1342.6 749.5C1340.6 741.8 1338.1 727.5 1339.6 728.0Z" fill="#9a5a25"/>
<path d="M1313.0 488.0C1314.3 484.7 1320.0 482.4 1322.0 484.4C1324.0 486.4 1325.1 496.1 1324.8 500.0C1324.5 503.9 1321.8 507.3 1320.0 508.0C1318.2 508.7 1315.2 507.3 1314.0 504.0C1312.8 500.7 1311.7 491.3 1313.0 488.0Z" fill="#9a5a25"/>
<path d="M1329.0 474.0C1330.2 469.1 1334.1 472.3 1336.6 472.6C1339.1 472.9 1342.9 473.8 1344.0 476.0C1345.1 478.2 1344.3 483.7 1343.0 486.0C1341.7 488.3 1337.3 487.0 1336.0 490.0C1334.7 493.0 1336.1 502.0 1335.0 504.0C1333.9 506.0 1330.5 507.0 1329.5 502.0C1328.5 497.0 1327.8 478.9 1329.0 474.0Z" fill="#9a5a25"/>
<path d="M1345.0 500.0C1345.8 496.0 1350.8 500.0 1353.0 504.0C1355.2 508.0 1357.7 518.7 1358.2 524.0C1358.7 529.3 1357.7 534.9 1356.0 535.6C1354.3 536.3 1349.8 533.9 1348.0 528.0C1346.2 522.1 1344.2 504.0 1345.0 500.0Z" fill="#9a5a25"/>
<path d="M1357.0 517.0C1357.7 513.7 1363.2 516.5 1366.0 520.0C1368.8 523.5 1373.0 533.5 1374.0 538.0C1375.0 542.5 1374.0 546.7 1372.0 547.0C1370.0 547.3 1364.5 545.0 1362.0 540.0C1359.5 535.0 1356.3 520.3 1357.0 517.0Z" fill="#9a5a25"/>
<path d="M1294.0 486.0C1295.2 484.3 1298.8 485.7 1300.0 490.0C1301.2 494.3 1301.7 507.7 1301.0 512.0C1300.3 516.3 1297.3 518.0 1296.0 516.0C1294.7 514.0 1293.3 505.0 1293.0 500.0C1292.7 495.0 1292.8 487.7 1294.0 486.0Z" fill="#9a5a25"/>
<path d="M1301.0 494.0C1302.2 492.3 1305.0 495.0 1306.0 500.0C1307.0 505.0 1307.7 519.3 1307.0 524.0C1306.3 528.7 1303.3 530.3 1302.0 528.0C1300.7 525.7 1299.2 515.7 1299.0 510.0C1298.8 504.3 1299.8 495.7 1301.0 494.0Z" fill="#9a5a25"/>
<defs><linearGradient id="gShade" x1="0" y1="0" x2="0" y2="1"><stop offset="0" stop-color="#7a3f14" stop-opacity="0"/><stop offset="1" stop-color="#7a3f14" stop-opacity=".3"/></linearGradient></defs><rect x="1290" y="560" width="130" height="250" fill="url(#gShade)"/>
<path d="M1344.9 445.6l9.4 -11.9" stroke="#7d4a22" stroke-width="1.100" opacity=".7"/>
<path d="M1345.6 450.8l8.7 -6.1" stroke="#7d4a22" stroke-width="1.100" opacity=".7"/>
<path d="M1347.9 453.2l8.7 -11.8" stroke="#7d4a22" stroke-width="1.100" opacity=".7"/>
<path d="M1349.5 458.1l7.2 -8.5" stroke="#8e5a2c" stroke-width="1.100" opacity=".7"/>
<path d="M1353.2 456.1l8.9 -8.6" stroke="#8e5a2c" stroke-width="1.100" opacity=".7"/>
<path d="M1351.8 461.1l11.0 -9.5" stroke="#b98552" stroke-width="1.100" opacity=".7"/>
<path d="M1353.9 461.6l12.7 -7.3" stroke="#8e5a2c" stroke-width="1.100" opacity=".7"/>
<path d="M1354.5 464.2l11.2 -10.8" stroke="#b98552" stroke-width="1.100" opacity=".7"/>
<path d="M1357.6 468.5l9.6 -11.9" stroke="#8e5a2c" stroke-width="1.100" opacity=".7"/>
<path d="M1358.4 472.2l7.5 -9.8" stroke="#8e5a2c" stroke-width="1.100" opacity=".7"/>
<path d="M1361.0 473.8l11.2 -12.0" stroke="#b98552" stroke-width="1.100" opacity=".7"/>
<path d="M1360.6 477.9l10.8 -9.9" stroke="#b98552" stroke-width="1.100" opacity=".7"/>
<path d="M1363.3 479.3l8.9 -9.1" stroke="#8e5a2c" stroke-width="1.100" opacity=".7"/>
<path d="M1363.8 477.7l8.4 -7.6" stroke="#b98552" stroke-width="1.100" opacity=".7"/>
<path d="M1365.3 485.5l8.7 -12.8" stroke="#8e5a2c" stroke-width="1.100" opacity=".7"/>
<path d="M1369.1 487.7l12.7 -7.9" stroke="#8e5a2c" stroke-width="1.100" opacity=".7"/>
<path d="M1367.9 486.6l12.8 -7.6" stroke="#c9976a" stroke-width="1.100" opacity=".7"/>
<path d="M1372.8 492.5l11.1 -12.5" stroke="#b98552" stroke-width="1.100" opacity=".7"/>
<path d="M1374.4 491.6l8.5 -8.8" stroke="#b98552" stroke-width="1.100" opacity=".7"/>
<path d="M1373.6 492.3l7.3 -11.8" stroke="#8e5a2c" stroke-width="1.100" opacity=".7"/>
<path d="M1377.8 498.2l9.6 -11.5" stroke="#b98552" stroke-width="1.100" opacity=".7"/>
<path d="M1375.7 497.6l11.4 -8.8" stroke="#b98552" stroke-width="1.100" opacity=".7"/>
<path d="M1379.2 503.0l10.5 -10.7" stroke="#7d4a22" stroke-width="1.100" opacity=".7"/>
<path d="M1378.7 505.4l11.6 -10.1" stroke="#b98552" stroke-width="1.100" opacity=".7"/>
<path d="M1381.6 506.2l9.5 -12.7" stroke="#c9976a" stroke-width="1.100" opacity=".7"/>
<path d="M1383.0 511.1l9.6 -11.5" stroke="#b98552" stroke-width="1.100" opacity=".7"/>
<path d="M1382.8 511.2l8.5 -11.5" stroke="#b98552" stroke-width="1.100" opacity=".7"/>
<path d="M1385.9 513.8l9.0 -6.8" stroke="#8e5a2c" stroke-width="1.100" opacity=".7"/>
<path d="M1388.0 520.6l9.4 -6.7" stroke="#7d4a22" stroke-width="1.100" opacity=".7"/>
<path d="M1389.2 517.7l8.3 -6.9" stroke="#b98552" stroke-width="1.100" opacity=".7"/>
<path d="M1390.0 523.6l11.8 -8.5" stroke="#c9976a" stroke-width="1.100" opacity=".7"/>
<path d="M1392.3 526.1l11.1 -11.1" stroke="#c9976a" stroke-width="1.100" opacity=".7"/>
<path d="M1395.5 525.1l12.8 -6.3" stroke="#b98552" stroke-width="1.100" opacity=".7"/>
<path d="M1393.3 532.5l7.8 -6.2" stroke="#7d4a22" stroke-width="1.100" opacity=".7"/>
<path d="M1398.1 533.7l9.8 -9.7" stroke="#c9976a" stroke-width="1.100" opacity=".7"/>
<path d="M1399.8 533.4l7.0 -6.5" stroke="#7d4a22" stroke-width="1.100" opacity=".7"/>
<path d="M1400.0 536.1l9.4 -7.6" stroke="#c9976a" stroke-width="1.100" opacity=".7"/>
<path d="M1402.6 540.4l12.3 -11.6" stroke="#8e5a2c" stroke-width="1.100" opacity=".7"/>
<path d="M1403.9 543.0l11.7 -6.6" stroke="#c9976a" stroke-width="1.100" opacity=".7"/>
<path d="M1402.2 542.3l10.6 -9.6" stroke="#8e5a2c" stroke-width="1.100" opacity=".7"/>
<path d="M1406.0 545.4l9.2 -7.6" stroke="#7d4a22" stroke-width="1.100" opacity=".7"/>
<path d="M1406.2 549.1l7.4 -6.3" stroke="#c9976a" stroke-width="1.100" opacity=".7"/>
<path d="M1408.1 554.3l8.9 -11.4" stroke="#c9976a" stroke-width="1.100" opacity=".7"/>
<path d="M1411.4 554.4l7.5 -6.6" stroke="#8e5a2c" stroke-width="1.100" opacity=".7"/>
<path d="M1411.6 557.1l12.1 -7.6" stroke="#7d4a22" stroke-width="1.100" opacity=".7"/>
<path d="M1413.5 562.6l10.8 -6.5" stroke="#c9976a" stroke-width="1.100" opacity=".7"/>
<path d="M1052.7 544.9C1049.3 546.2 1047.3 549.0 1045.7 553.7C1044.1 558.4 1042.8 567.5 1043.1 572.9C1043.4 578.3 1045.3 584.8 1047.5 586.0C1049.7 587.2 1053.2 582.5 1056.0 580.0C1058.8 577.5 1060.3 574.0 1064.0 571.0C1067.7 568.0 1072.7 564.5 1078.0 562.0C1083.3 559.5 1091.0 557.7 1096.0 556.0C1101.0 554.3 1109.7 553.2 1108.0 552.0C1106.3 550.8 1093.0 550.0 1086.0 549.0C1079.0 548.0 1071.5 546.7 1066.0 546.0C1060.5 545.3 1056.1 543.6 1052.7 544.9Z" fill="#8d8891"/>
<path d="M1050 560c8-6 24-8 40-6" stroke="#6f6a75" stroke-width="3" fill="none" opacity=".7"/></g>
<path d="M1313.4 692.2L1312.7 694.2L1311.0 696.2L1309.2 698.0L1308.3 699.8L1308.7 701.8L1309.9 704.0L1311.1 706.3L1311.3 708.5L1310.0 710.3L1307.9 711.7L1305.7 713.0L1304.4 714.5L1304.2 716.5L1304.9 719.0L1305.4 721.5L1305.0 723.7L1303.3 725.1L1300.9 725.9L1298.4 726.6L1296.8 727.7L1296.1 729.6L1296.1 732.2L1295.9 734.7L1295.0 736.7L1293.0 737.6L1290.5 737.8L1287.9 737.8L1286.0 738.5L1284.9 740.1L1284.2 742.6L1283.4 745.0L1282.0 746.7L1279.8 747.1L1277.3 746.6L1274.8 745.9L1272.8 746.1L1271.3 747.4L1270.0 749.6L1268.6 751.7L1266.8 753.0L1264.6 752.8L1262.3 751.6L1260.1 750.4L1258.1 750.0L1256.3 750.9L1254.5 752.7L1252.5 754.4L1250.5 755.1L1248.5 754.4L1246.5 752.7L1244.7 750.9L1242.9 750.0L1240.9 750.4L1238.7 751.6L1236.4 752.8L1234.2 753.0L1232.4 751.7L1231.0 749.6L1229.7 747.4L1228.2 746.1L1226.2 745.9L1223.7 746.6L1221.2 747.1L1219.0 746.7L1217.6 745.0L1216.8 742.6L1216.1 740.1L1215.0 738.5L1213.1 737.8L1210.5 737.8L1208.0 737.6L1206.0 736.7L1205.1 734.7L1204.9 732.2L1204.9 729.6L1204.2 727.7L1202.6 726.6L1200.1 725.9L1197.7 725.1L1196.0 723.7L1195.6 721.5L1196.1 719.0L1196.8 716.5L1196.6 714.5L1195.3 713.0L1193.1 711.7L1191.0 710.3L1189.7 708.5L1189.9 706.3L1191.1 704.0L1192.3 701.8L1192.7 699.8L1191.8 698.0L1190.0 696.2L1188.3 694.2L1187.6 692.2L1188.3 690.2L1190.0 688.2L1191.8 686.4L1192.7 684.6L1192.3 682.6L1191.1 680.4L1189.9 678.1L1189.7 675.9L1191.0 674.1L1193.1 672.7L1195.3 671.4L1196.6 669.9L1196.8 667.9L1196.1 665.4L1195.6 662.9L1196.0 660.8L1197.7 659.3L1200.1 658.5L1202.6 657.8L1204.2 656.7L1204.9 654.8L1204.9 652.2L1205.1 649.7L1206.0 647.7L1208.0 646.8L1210.5 646.6L1213.1 646.6L1215.0 645.9L1216.1 644.3L1216.8 641.8L1217.6 639.4L1219.0 637.7L1221.2 637.3L1223.7 637.8L1226.2 638.5L1228.2 638.3L1229.7 637.0L1231.0 634.8L1232.4 632.7L1234.2 631.4L1236.4 631.6L1238.7 632.8L1240.9 634.0L1242.9 634.4L1244.7 633.5L1246.5 631.7L1248.5 630.0L1250.5 629.3L1252.5 630.0L1254.5 631.7L1256.3 633.5L1258.1 634.4L1260.1 634.0L1262.3 632.8L1264.6 631.6L1266.8 631.4L1268.6 632.7L1270.0 634.8L1271.3 637.0L1272.8 638.3L1274.8 638.5L1277.3 637.8L1279.8 637.3L1282.0 637.7L1283.4 639.4L1284.2 641.8L1284.9 644.3L1286.0 645.9L1287.9 646.6L1290.5 646.6L1293.0 646.8L1295.0 647.7L1295.9 649.7L1296.1 652.2L1296.1 654.8L1296.8 656.7L1298.4 657.8L1300.9 658.5L1303.3 659.3L1305.0 660.8L1305.4 662.9L1304.9 665.4L1304.2 667.9L1304.4 669.9L1305.7 671.4L1307.9 672.7L1310.0 674.1L1311.3 675.9L1311.1 678.1L1309.9 680.4L1308.7 682.6L1308.3 684.6L1309.2 686.4L1311.0 688.2L1312.7 690.2Z" fill="#fff"/>
<text x="919.7" y="401.1" textLength="146" lengthAdjust="spacingAndGlyphs" font-family="Liberation Sans, sans-serif" font-weight="400" font-size="19.4" fill="#ffff6e" stroke="#ffff6e" stroke-width="0.81" stroke-linejoin="round">Explore Inside</text>
<text x="919.7" y="428.2" textLength="183.7" lengthAdjust="spacingAndGlyphs" font-family="Liberation Sans, sans-serif" font-weight="400" font-size="19.4" fill="#fff" stroke="#fff" stroke-width="0.81" stroke-linejoin="round">the Zoo With Zoe</text>
<text x="919.6" y="507.4" textLength="20" lengthAdjust="spacingAndGlyphs" font-family="Liberation Sans, sans-serif" font-weight="400" font-size="36" fill="#ffff6e" stroke="#ffff6e" stroke-width="1.51" stroke-linejoin="round">5</text>
<text x="919.5" y="535.3" textLength="58.2" lengthAdjust="spacingAndGlyphs" font-family="Liberation Sans, sans-serif" font-weight="400" font-size="18.8" fill="#fff" stroke="#fff" stroke-width="0.79" stroke-linejoin="round">Gross</text>
<text x="919.5" y="557.8" textLength="82.7" lengthAdjust="spacingAndGlyphs" font-family="Liberation Sans, sans-serif" font-weight="400" font-size="18.8" fill="#fff" stroke="#fff" stroke-width="0.79" stroke-linejoin="round">Animals</text>
<text x="919.5" y="580.2" textLength="55.7" lengthAdjust="spacingAndGlyphs" font-family="Liberation Sans, sans-serif" font-weight="400" font-size="18.8" fill="#fff" stroke="#fff" stroke-width="0.79" stroke-linejoin="round">You’ll</text>
<text x="919.5" y="602.4" textLength="49.9" lengthAdjust="spacingAndGlyphs" font-family="Liberation Sans, sans-serif" font-weight="400" font-size="18.8" fill="#fff" stroke="#fff" stroke-width="0.79" stroke-linejoin="round">Love</text>
<text x="919.1" y="664.7" textLength="222.6" lengthAdjust="spacingAndGlyphs" font-family="Liberation Sans, sans-serif" font-weight="400" font-size="19.4" fill="#ffff6e" stroke="#ffff6e" stroke-width="0.81" stroke-linejoin="round">What’s Your Favorite</text>
<text x="919.5" y="685.5" textLength="83.1" lengthAdjust="spacingAndGlyphs" font-family="Liberation Sans, sans-serif" font-weight="400" font-size="19.4" fill="#fff" stroke="#fff" stroke-width="0.81" stroke-linejoin="round">Animal?</text>
<text x="1199.6" y="689.3" textLength="100.3" lengthAdjust="spacingAndGlyphs" font-family="Liberation Sans, sans-serif" font-weight="400" font-size="24.7" fill="#24c894" stroke="#24c894" stroke-width="1.04" stroke-linejoin="round">Posters</text>
<text x="1207" y="714.4" textLength="85.5" lengthAdjust="spacingAndGlyphs" font-family="Liberation Sans, sans-serif" font-weight="400" font-size="24.7" fill="#24c894" stroke="#24c894" stroke-width="1.04" stroke-linejoin="round">Inside!</text>
</svg>
<div class="abs" style="left:507px;top:710px;width:513px;height:120px;background:#fff"></div>
<div class="abs" style="left:1294px;top:759px;width:32px;height:32px;border-radius:16px;background:#fff;box-shadow:0 2px 8px rgba(0,0,0,.14),0 0 2px rgba(0,0,0,.08)"></div>
<svg class="abs" style="left:1294px;top:759px" width="32" height="32" viewBox="0 0 32 32" fill="#222"><circle cx="9.600" cy="16" r="1.700"/><circle cx="16" cy="16" r="1.700"/><circle cx="22.400" cy="16" r="1.700"/></svg>
<div class="abs" style="left:1334px;top:759px;width:32px;height:32px;border-radius:16px;background:#fff;box-shadow:0 2px 8px rgba(0,0,0,.14),0 0 2px rgba(0,0,0,.08)"></div>
<svg class="abs" style="left:1334px;top:759px" width="32" height="32" viewBox="0 0 32 32" fill="none" stroke="#222" stroke-width="1.700"><rect x="8" y="8" width="6" height="6" rx="1.300"/><rect x="18" y="8" width="6" height="6" rx="1.300"/><rect x="8" y="18" width="6" height="6" rx="1.300"/><rect x="18" y="18" width="6" height="6" rx="1.300"/></svg>
<div class="abs" style="left:1374px;top:759px;width:129px;height:32px;border-radius:16px;background:#fff;box-shadow:0 2px 8px rgba(0,0,0,.14),0 0 2px rgba(0,0,0,.08)"></div>
<span class="t" style="left:1390.6px;top:767.7px;font-size:13px;font-weight:700;color:#222;letter-spacing:-0.576px;">Seite 1 von 2</span>
<svg class="abs" style="left:1470px;top:768px" width="16" height="14" viewBox="1863 873 16 14" fill="none" stroke="#222" stroke-width="2" stroke-linecap="round" stroke-linejoin="round"><path d="M1866.500 882.400l4.500-4.500 4.500 4.500"/></svg>
</div>

</body>
</html>
